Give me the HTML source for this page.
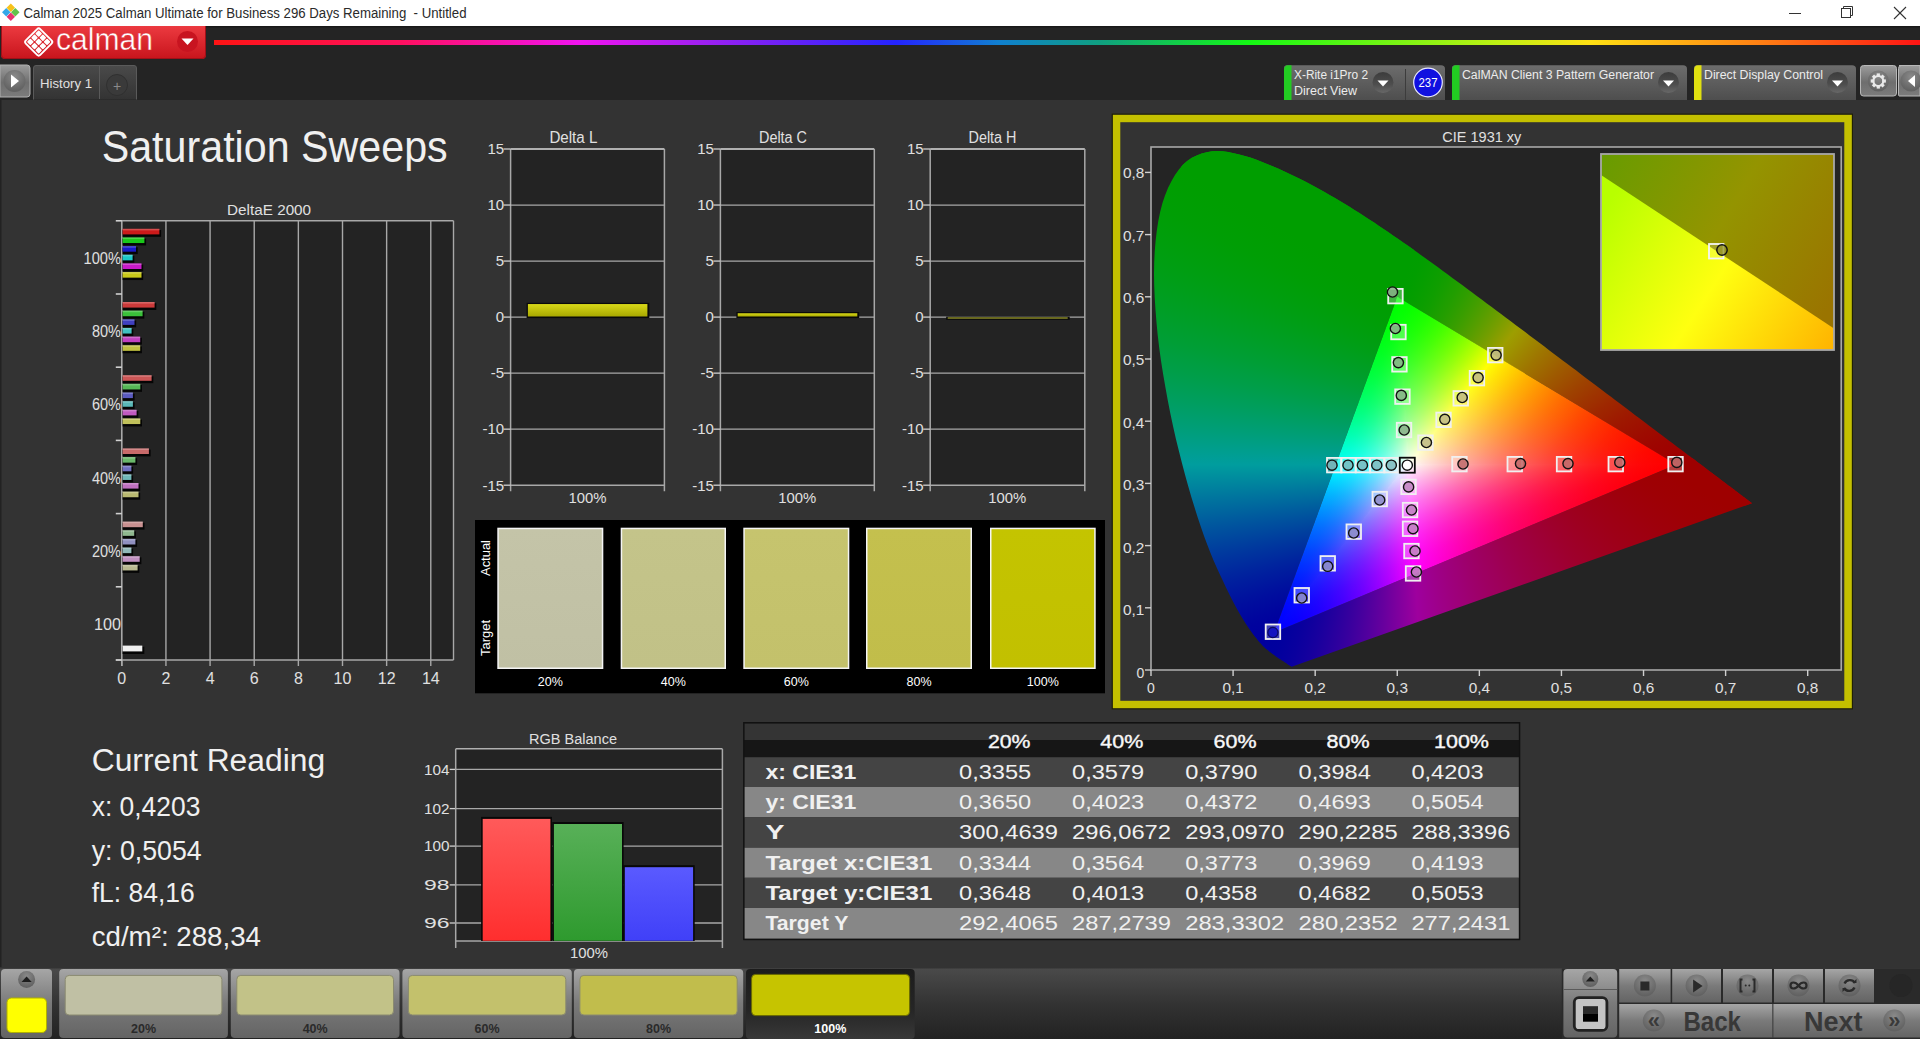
<!DOCTYPE html><html><head><meta charset="utf-8"><title>Calman</title><style>
html,body{margin:0;padding:0;width:1920px;height:1039px;overflow:hidden;background:#333333;}
#root{position:relative;width:1920px;height:1039px;overflow:hidden;}
svg.L{position:absolute;left:0;top:0;}
text{font-family:"Liberation Sans",sans-serif;}
.cie{position:absolute;left:0;top:0;width:1920px;height:1039px;}
.cie > div{position:absolute;left:0;top:0;width:1920px;height:1039px;}
</style></head><body><div id="root">
<svg class="L" width="1920" height="1039" viewBox="0 0 1920 1039">
<defs>
<linearGradient id="gLogo" x1="0" y1="0" x2="0" y2="1"><stop offset="0" stop-color="#ec3a40"/><stop offset="1" stop-color="#c8141c"/></linearGradient>
<linearGradient id="gRain" x1="214" y1="0" x2="1920" y2="0" gradientUnits="userSpaceOnUse">
<stop offset="0" stop-color="#ff1414"/><stop offset="0.11" stop-color="#ff1060"/><stop offset="0.215" stop-color="#f014f0"/><stop offset="0.285" stop-color="#a020f0"/><stop offset="0.40" stop-color="#2424ff"/><stop offset="0.46" stop-color="#1080d0"/><stop offset="0.52" stop-color="#10a080"/><stop offset="0.607" stop-color="#14f814"/><stop offset="0.754" stop-color="#c0f014"/><stop offset="0.807" stop-color="#ffe014"/><stop offset="0.906" stop-color="#ff8014"/><stop offset="1" stop-color="#ff1414"/></linearGradient>
<linearGradient id="gBtn" x1="0" y1="0" x2="0" y2="1"><stop offset="0" stop-color="#9c9c9c"/><stop offset="0.55" stop-color="#6e6e6e"/><stop offset="1" stop-color="#7c7c7c"/></linearGradient>
<linearGradient id="gDev" x1="0" y1="0" x2="0" y2="1"><stop offset="0" stop-color="#6c6c6c"/><stop offset="1" stop-color="#4e4e4e"/></linearGradient>
<linearGradient id="gTab" x1="0" y1="0" x2="0" y2="1"><stop offset="0" stop-color="#4a4a4a"/><stop offset="1" stop-color="#333333"/></linearGradient>
<radialGradient id="gKnob" cx="0.5" cy="0.35" r="0.6"><stop offset="0" stop-color="#5a5a5a"/><stop offset="1" stop-color="#3a3a3a"/></radialGradient>
<linearGradient id="gKnobD" x1="0" y1="0" x2="0" y2="1"><stop offset="0" stop-color="#3c3c3c"/><stop offset="0.6" stop-color="#4e4e4e"/><stop offset="1" stop-color="#686868"/></linearGradient>
<radialGradient id="gKnobL" cx="0.5" cy="0.3" r="0.65"><stop offset="0" stop-color="#8a8a8a"/><stop offset="1" stop-color="#626262"/></radialGradient>
<linearGradient id="gHdr" x1="0" y1="0" x2="0" y2="1"><stop offset="0" stop-color="#343434"/><stop offset="0.5" stop-color="#343434"/><stop offset="0.5" stop-color="#161616"/><stop offset="1" stop-color="#161616"/></linearGradient>
<linearGradient id="gBarY" x1="0" y1="0" x2="0" y2="1"><stop offset="0" stop-color="#d8d818"/><stop offset="1" stop-color="#a8a800"/></linearGradient>
<linearGradient id="gRed" x1="0" y1="0" x2="0" y2="1"><stop offset="0" stop-color="#ff5a5a"/><stop offset="1" stop-color="#ff2e2e"/></linearGradient>
<linearGradient id="gGrn" x1="0" y1="0" x2="0" y2="1"><stop offset="0" stop-color="#58b058"/><stop offset="1" stop-color="#2e9a2e"/></linearGradient>
<linearGradient id="gBlu" x1="0" y1="0" x2="0" y2="1"><stop offset="0" stop-color="#5a5aff"/><stop offset="1" stop-color="#4040f8"/></linearGradient>
<linearGradient id="gBot" x1="0" y1="0" x2="0" y2="1"><stop offset="0" stop-color="#a6a6a6"/><stop offset="0.5" stop-color="#7a7a7a"/><stop offset="1" stop-color="#646464"/></linearGradient>
<linearGradient id="gBotSel" x1="0" y1="0" x2="0" y2="1"><stop offset="0" stop-color="#1c1c1c"/><stop offset="0.6" stop-color="#262626"/><stop offset="1" stop-color="#383838"/></linearGradient>
</defs>
<rect x="0" y="0" width="1920" height="26" fill="#ffffff" />
<g transform="translate(10.8,12.3) rotate(45)"><rect x="-6.2" y="-6.2" width="6" height="6" fill="#f7c21a"/><rect x="0.2" y="-6.2" width="6" height="6" fill="#62c24a"/><rect x="0.2" y="0.2" width="6" height="6" fill="#e8336f"/><rect x="-6.2" y="0.2" width="6" height="6" fill="#35a7e8"/></g>
<text x="23.5" y="18" font-size="14" fill="#2a2a2a" text-anchor="start" font-weight="normal" textLength="443" lengthAdjust="spacingAndGlyphs" >Calman 2025 Calman Ultimate for Business 296 Days Remaining&#160;&#160;- Untitled</text>
<line x1="1789" y1="13.5" x2="1801" y2="13.5" stroke="#333" stroke-width="1" />
<rect x="1841.5" y="8.5" width="9" height="9" fill="none" stroke="#333" stroke-width="1"/>
<path d="M1843.5 8.5 V6.5 H1852.5 V15.5 H1850.5" fill="none" stroke="#333" stroke-width="1"/>
<line x1="1894" y1="7" x2="1906" y2="19" stroke="#333" stroke-width="1.1" />
<line x1="1906" y1="7" x2="1894" y2="19" stroke="#333" stroke-width="1.1" />
<rect x="0" y="26" width="1920" height="74" fill="#242424" />
<rect x="0" y="26" width="1920" height="1.5" fill="#181818" />
<path d="M1 26 H206 V55 Q206 59 202 59 H5 Q1 59 1 55 Z" fill="url(#gLogo)"/>
<path d="M1.5 26 V55 Q1.5 58.5 5 58.5 H202 Q205.5 58.5 205.5 55 V26" fill="none" stroke="#a01018" stroke-width="1"/>
<g transform="translate(38.7,42) rotate(45)"><rect x="-8.40" y="-8.40" width="4.9" height="4.9" rx="0.8" fill="#ffffff"/><rect x="-8.40" y="-2.50" width="4.9" height="4.9" rx="0.8" fill="#ffffff"/><rect x="-8.40" y="3.40" width="4.9" height="4.9" rx="0.8" fill="#ffffff"/><rect x="-2.50" y="-8.40" width="4.9" height="4.9" rx="0.8" fill="#ffffff"/><rect x="-2.50" y="-2.50" width="4.9" height="4.9" rx="0.8" fill="#ffffff"/><rect x="-2.50" y="3.40" width="4.9" height="4.9" rx="0.8" fill="#ffffff"/><rect x="3.40" y="-8.40" width="4.9" height="4.9" rx="0.8" fill="#ffffff"/><rect x="3.40" y="-2.50" width="4.9" height="4.9" rx="0.8" fill="#ffffff"/><rect x="3.40" y="3.40" width="4.9" height="4.9" rx="0.8" fill="#ffffff"/><rect x="-10.2" y="-10.2" width="20.4" height="20.4" rx="2.2" fill="none" stroke="#ffffff" stroke-width="1.9"/></g>
<text x="56" y="49.5" font-size="30.5" fill="#ffffff" text-anchor="start" font-weight="normal" textLength="97" lengthAdjust="spacingAndGlyphs" stroke="#dc2a30" stroke-width="0.45">calman</text>
<circle cx="187.5" cy="41.5" r="10.5" fill="#c81420"/>
<path d="M181.5 38.5 L193.5 38.5 L187.5 45 Z" fill="#ffffff"/>
<rect x="214" y="40" width="1706" height="5" fill="url(#gRain)" />
<path d="M0 65 H27 Q30 65 30 68 V94 Q30 97 27 97 H0 Z" fill="url(#gBtn)" stroke="#b0b0b0" stroke-width="1"/>
<circle cx="14.5" cy="81" r="11" fill="url(#gKnobL)"/>
<path d="M11 74.5 L19 81 L11 87.5 Z" fill="#ffffff"/>
<path d="M33.5 99.5 V68 Q33.5 65.5 36 65.5 H134 Q136.5 65.5 136.5 68 V99.5" fill="url(#gTab)" stroke="#5a5a5a" stroke-width="1"/>
<line x1="99.5" y1="66" x2="99.5" y2="99" stroke="#5a5a5a" stroke-width="1" />
<text x="40" y="88" font-size="13.5" fill="#e0e0e0" text-anchor="start" font-weight="normal" textLength="52" lengthAdjust="spacingAndGlyphs" >History 1</text>
<circle cx="117" cy="85" r="10.5" fill="#3a3a3a" stroke="#303030"/>
<text x="117" y="90.5" font-size="14" fill="#8a8a8a" text-anchor="middle" font-weight="normal" >+</text>
<path d="M1284 100 V68 Q1284 65.3 1287 65.3 H1441 Q1445 65.3 1445 69 V100 Z" fill="url(#gDev)"/>
<path d="M1284 100 V70 Q1284 65.3 1288 65.3 H1291.5 V100 Z" fill="#22cc22"/>
<text x="1294" y="78.5" font-size="12.5" fill="#ececec" text-anchor="start" font-weight="normal" textLength="74" lengthAdjust="spacingAndGlyphs" >X-Rite i1Pro 2</text>
<text x="1294" y="95" font-size="12.5" fill="#ececec" text-anchor="start" font-weight="normal" textLength="63" lengthAdjust="spacingAndGlyphs" >Direct View</text>
<circle cx="1383" cy="82.5" r="10.5" fill="url(#gKnobD)"/>
<path d="M1377.5 80.5 H1388.5 L1383 86.5 Z" fill="#ffffff"/>
<line x1="1405.5" y1="69" x2="1405.5" y2="100" stroke="#3c3c3c" stroke-width="1" />
<circle cx="1428" cy="82.5" r="14.3" fill="#1010e0" stroke="#e8e8ff" stroke-width="1.2"/>
<text x="1428" y="87" font-size="12" fill="#ffffff" text-anchor="middle" font-weight="normal" textLength="19" lengthAdjust="spacingAndGlyphs" >237</text>
<path d="M1452 100 V68 Q1452 65.3 1455 65.3 H1683 Q1687 65.3 1687 69 V100 Z" fill="url(#gDev)"/>
<path d="M1452 100 V70 Q1452 65.3 1456 65.3 H1459.5 V100 Z" fill="#22cc22"/>
<text x="1462" y="78.5" font-size="12.5" fill="#ececec" text-anchor="start" font-weight="normal" textLength="192" lengthAdjust="spacingAndGlyphs" >CalMAN Client 3 Pattern Generator</text>
<circle cx="1668.5" cy="82.5" r="10.5" fill="url(#gKnobD)"/>
<path d="M1663.0 80.5 H1674.0 L1668.5 86.5 Z" fill="#ffffff"/>
<path d="M1694 100 V68 Q1694 65.3 1697 65.3 H1852 Q1856 65.3 1856 69 V100 Z" fill="url(#gDev)"/>
<path d="M1694 100 V70 Q1694 65.3 1698 65.3 H1701.5 V100 Z" fill="#e0e010"/>
<text x="1704" y="78.5" font-size="12.5" fill="#ececec" text-anchor="start" font-weight="normal" textLength="119" lengthAdjust="spacingAndGlyphs" >Direct Display Control</text>
<circle cx="1837.5" cy="82.5" r="10.5" fill="url(#gKnobD)"/>
<path d="M1832.0 80.5 H1843.0 L1837.5 86.5 Z" fill="#ffffff"/>
<rect x="1860.5" y="65.5" width="36" height="30.5" rx="3" fill="url(#gBtn)" stroke="#b8b8b8" stroke-width="1"/>
<circle cx="1878.3" cy="81" r="10.5" fill="url(#gKnobL)"/>
<rect x="-1.6" y="-7.6" width="3.2" height="3.6" fill="#e8e8e8" transform="translate(1878.3,81) rotate(0)"/><rect x="-1.6" y="-7.6" width="3.2" height="3.6" fill="#e8e8e8" transform="translate(1878.3,81) rotate(45)"/><rect x="-1.6" y="-7.6" width="3.2" height="3.6" fill="#e8e8e8" transform="translate(1878.3,81) rotate(90)"/><rect x="-1.6" y="-7.6" width="3.2" height="3.6" fill="#e8e8e8" transform="translate(1878.3,81) rotate(135)"/><rect x="-1.6" y="-7.6" width="3.2" height="3.6" fill="#e8e8e8" transform="translate(1878.3,81) rotate(180)"/><rect x="-1.6" y="-7.6" width="3.2" height="3.6" fill="#e8e8e8" transform="translate(1878.3,81) rotate(225)"/><rect x="-1.6" y="-7.6" width="3.2" height="3.6" fill="#e8e8e8" transform="translate(1878.3,81) rotate(270)"/><rect x="-1.6" y="-7.6" width="3.2" height="3.6" fill="#e8e8e8" transform="translate(1878.3,81) rotate(315)"/>
<circle cx="1878.3" cy="81" r="5" fill="none" stroke="#e8e8e8" stroke-width="2.2"/>
<path d="M1899 65.5 H1920 V96 H1899 Q1898.5 96 1898.5 93 V68.5 Q1898.5 65.5 1901.5 65.5 Z" fill="url(#gBtn)" stroke="#b8b8b8" stroke-width="1"/>
<circle cx="1911" cy="81" r="10.5" fill="url(#gKnobL)"/>
<path d="M1915 75 L1908 81 L1915 87 Z" fill="#ffffff"/>
<rect x="0" y="100" width="1920" height="867" fill="#333333" />
<rect x="0" y="100" width="1.5" height="867" fill="#222222" />
<text x="101.7" y="162" font-size="43.5" fill="#f0f0f0" text-anchor="start" font-weight="normal" textLength="346" lengthAdjust="spacingAndGlyphs" >Saturation Sweeps</text>
<rect x="121.8" y="220.8" width="331.7" height="439.2" fill="#232323" />
<line x1="165.94" y1="220.8" x2="165.94" y2="660.0" stroke="#a8a8a8" stroke-width="1.4" />
<line x1="210.07999999999998" y1="220.8" x2="210.07999999999998" y2="660.0" stroke="#a8a8a8" stroke-width="1.4" />
<line x1="254.22000000000003" y1="220.8" x2="254.22000000000003" y2="660.0" stroke="#a8a8a8" stroke-width="1.4" />
<line x1="298.36" y1="220.8" x2="298.36" y2="660.0" stroke="#a8a8a8" stroke-width="1.4" />
<line x1="342.5" y1="220.8" x2="342.5" y2="660.0" stroke="#a8a8a8" stroke-width="1.4" />
<line x1="386.64000000000004" y1="220.8" x2="386.64000000000004" y2="660.0" stroke="#a8a8a8" stroke-width="1.4" />
<line x1="430.78000000000003" y1="220.8" x2="430.78000000000003" y2="660.0" stroke="#a8a8a8" stroke-width="1.4" />
<line x1="121.8" y1="220.8" x2="453.5" y2="220.8" stroke="#a8a8a8" stroke-width="1.6" />
<line x1="453.5" y1="220.8" x2="453.5" y2="660.0" stroke="#a8a8a8" stroke-width="1.4" />
<line x1="121.8" y1="220.0" x2="121.8" y2="666.0" stroke="#a8a8a8" stroke-width="1.6" />
<line x1="115.8" y1="660.0" x2="453.5" y2="660.0" stroke="#a8a8a8" stroke-width="1.6" />
<line x1="121.8" y1="660.0" x2="121.8" y2="666.0" stroke="#a8a8a8" stroke-width="1.4" />
<text x="121.8" y="684" font-size="16" fill="#e0e0e0" text-anchor="middle" font-weight="normal" >0</text>
<line x1="165.94" y1="660.0" x2="165.94" y2="666.0" stroke="#a8a8a8" stroke-width="1.4" />
<text x="165.94" y="684" font-size="16" fill="#e0e0e0" text-anchor="middle" font-weight="normal" >2</text>
<line x1="210.07999999999998" y1="660.0" x2="210.07999999999998" y2="666.0" stroke="#a8a8a8" stroke-width="1.4" />
<text x="210.07999999999998" y="684" font-size="16" fill="#e0e0e0" text-anchor="middle" font-weight="normal" >4</text>
<line x1="254.22000000000003" y1="660.0" x2="254.22000000000003" y2="666.0" stroke="#a8a8a8" stroke-width="1.4" />
<text x="254.22000000000003" y="684" font-size="16" fill="#e0e0e0" text-anchor="middle" font-weight="normal" >6</text>
<line x1="298.36" y1="660.0" x2="298.36" y2="666.0" stroke="#a8a8a8" stroke-width="1.4" />
<text x="298.36" y="684" font-size="16" fill="#e0e0e0" text-anchor="middle" font-weight="normal" >8</text>
<line x1="342.5" y1="660.0" x2="342.5" y2="666.0" stroke="#a8a8a8" stroke-width="1.4" />
<text x="342.5" y="684" font-size="16" fill="#e0e0e0" text-anchor="middle" font-weight="normal" >10</text>
<line x1="386.64000000000004" y1="660.0" x2="386.64000000000004" y2="666.0" stroke="#a8a8a8" stroke-width="1.4" />
<text x="386.64000000000004" y="684" font-size="16" fill="#e0e0e0" text-anchor="middle" font-weight="normal" >12</text>
<line x1="430.78000000000003" y1="660.0" x2="430.78000000000003" y2="666.0" stroke="#a8a8a8" stroke-width="1.4" />
<text x="430.78000000000003" y="684" font-size="16" fill="#e0e0e0" text-anchor="middle" font-weight="normal" >14</text>
<line x1="115.8" y1="220.8" x2="121.8" y2="220.8" stroke="#d0d0d0" stroke-width="1.6" />
<line x1="115.8" y1="294.0" x2="121.8" y2="294.0" stroke="#d0d0d0" stroke-width="1.6" />
<line x1="115.8" y1="367.20000000000005" x2="121.8" y2="367.20000000000005" stroke="#d0d0d0" stroke-width="1.6" />
<line x1="115.8" y1="440.40000000000003" x2="121.8" y2="440.40000000000003" stroke="#d0d0d0" stroke-width="1.6" />
<line x1="115.8" y1="513.6" x2="121.8" y2="513.6" stroke="#d0d0d0" stroke-width="1.6" />
<line x1="115.8" y1="586.8" x2="121.8" y2="586.8" stroke="#d0d0d0" stroke-width="1.6" />
<line x1="115.8" y1="660.0" x2="121.8" y2="660.0" stroke="#d0d0d0" stroke-width="1.6" />
<text x="227.1" y="215" font-size="15.5" fill="#e0e0e0" text-anchor="start" font-weight="normal" textLength="84" lengthAdjust="spacingAndGlyphs" >DeltaE 2000</text>
<text x="121" y="264.0" font-size="16" fill="#e0e0e0" text-anchor="end" font-weight="normal" textLength="37.5" lengthAdjust="spacingAndGlyphs" >100%</text>
<text x="121" y="337.2" font-size="16" fill="#e0e0e0" text-anchor="end" font-weight="normal" textLength="29" lengthAdjust="spacingAndGlyphs" >80%</text>
<text x="121" y="410.40000000000003" font-size="16" fill="#e0e0e0" text-anchor="end" font-weight="normal" textLength="29" lengthAdjust="spacingAndGlyphs" >60%</text>
<text x="121" y="483.6" font-size="16" fill="#e0e0e0" text-anchor="end" font-weight="normal" textLength="29" lengthAdjust="spacingAndGlyphs" >40%</text>
<text x="121" y="556.8000000000001" font-size="16" fill="#e0e0e0" text-anchor="end" font-weight="normal" textLength="29" lengthAdjust="spacingAndGlyphs" >20%</text>
<text x="121" y="630.0" font-size="16" fill="#e0e0e0" text-anchor="end" font-weight="normal" textLength="27" lengthAdjust="spacingAndGlyphs" >100</text>
<rect x="122.6" y="230.0" width="38.500000000000014" height="6.8" fill="#050505" />
<rect x="122.6" y="228.8" width="36.80000000000001" height="5.6" fill="#cc1a1a" />
<rect x="122.6" y="228.8" width="36.80000000000001" height="1.6" fill="rgba(255,255,255,0.22)" />
<rect x="122.6" y="238.65" width="23.500000000000014" height="6.8" fill="#050505" />
<rect x="122.6" y="237.45000000000002" width="21.800000000000015" height="5.6" fill="#1ac81a" />
<rect x="122.6" y="237.45000000000002" width="21.800000000000015" height="1.6" fill="rgba(255,255,255,0.22)" />
<rect x="122.6" y="247.3" width="15.100000000000009" height="6.8" fill="#050505" />
<rect x="122.6" y="246.10000000000002" width="13.40000000000001" height="5.6" fill="#1a1ac8" />
<rect x="122.6" y="246.10000000000002" width="13.40000000000001" height="1.6" fill="rgba(255,255,255,0.22)" />
<rect x="122.6" y="255.95" width="11.700000000000003" height="6.8" fill="#050505" />
<rect x="122.6" y="254.75" width="10.000000000000004" height="5.6" fill="#1ac8c8" />
<rect x="122.6" y="254.75" width="10.000000000000004" height="1.6" fill="rgba(255,255,255,0.22)" />
<rect x="122.6" y="264.6" width="20.60000000000001" height="6.8" fill="#050505" />
<rect x="122.6" y="263.40000000000003" width="18.90000000000001" height="5.6" fill="#c81ac8" />
<rect x="122.6" y="263.40000000000003" width="18.90000000000001" height="1.6" fill="rgba(255,255,255,0.22)" />
<rect x="122.6" y="273.25" width="20.60000000000001" height="6.8" fill="#050505" />
<rect x="122.6" y="272.05" width="18.90000000000001" height="5.6" fill="#c8c81a" />
<rect x="122.6" y="272.05" width="18.90000000000001" height="1.6" fill="rgba(255,255,255,0.22)" />
<rect x="122.6" y="303.2" width="33.7" height="6.8" fill="#050505" />
<rect x="122.6" y="302.0" width="32.0" height="5.6" fill="#cc3a3a" />
<rect x="122.6" y="302.0" width="32.0" height="1.6" fill="rgba(255,255,255,0.22)" />
<rect x="122.6" y="311.84999999999997" width="21.700000000000003" height="6.8" fill="#050505" />
<rect x="122.6" y="310.65" width="20.000000000000004" height="5.6" fill="#3ac03a" />
<rect x="122.6" y="310.65" width="20.000000000000004" height="1.6" fill="rgba(255,255,255,0.22)" />
<rect x="122.6" y="320.5" width="13.600000000000009" height="6.8" fill="#050505" />
<rect x="122.6" y="319.3" width="11.90000000000001" height="5.6" fill="#4040c0" />
<rect x="122.6" y="319.3" width="11.90000000000001" height="1.6" fill="rgba(255,255,255,0.22)" />
<rect x="122.6" y="329.15" width="10.700000000000003" height="6.8" fill="#050505" />
<rect x="122.6" y="327.95" width="9.000000000000004" height="5.6" fill="#40c0c0" />
<rect x="122.6" y="327.95" width="9.000000000000004" height="1.6" fill="rgba(255,255,255,0.22)" />
<rect x="122.6" y="337.8" width="19.299999999999997" height="6.8" fill="#050505" />
<rect x="122.6" y="336.6" width="17.599999999999998" height="5.6" fill="#c040c0" />
<rect x="122.6" y="336.6" width="17.599999999999998" height="1.6" fill="rgba(255,255,255,0.22)" />
<rect x="122.6" y="346.45" width="19.299999999999997" height="6.8" fill="#050505" />
<rect x="122.6" y="345.25" width="17.599999999999998" height="5.6" fill="#c0c040" />
<rect x="122.6" y="345.25" width="17.599999999999998" height="1.6" fill="rgba(255,255,255,0.22)" />
<rect x="122.6" y="376.40000000000003" width="30.700000000000003" height="6.8" fill="#050505" />
<rect x="122.6" y="375.20000000000005" width="29.000000000000004" height="5.6" fill="#cc5656" />
<rect x="122.6" y="375.20000000000005" width="29.000000000000004" height="1.6" fill="rgba(255,255,255,0.22)" />
<rect x="122.6" y="385.05" width="19.39999999999999" height="6.8" fill="#050505" />
<rect x="122.6" y="383.85" width="17.699999999999992" height="5.6" fill="#56b856" />
<rect x="122.6" y="383.85" width="17.699999999999992" height="1.6" fill="rgba(255,255,255,0.22)" />
<rect x="122.6" y="393.70000000000005" width="12.000000000000014" height="6.8" fill="#050505" />
<rect x="122.6" y="392.50000000000006" width="10.300000000000015" height="5.6" fill="#5a5ac0" />
<rect x="122.6" y="392.50000000000006" width="10.300000000000015" height="1.6" fill="rgba(255,255,255,0.22)" />
<rect x="122.6" y="402.35" width="12.000000000000014" height="6.8" fill="#050505" />
<rect x="122.6" y="401.15000000000003" width="10.300000000000015" height="5.6" fill="#5ab8b8" />
<rect x="122.6" y="401.15000000000003" width="10.300000000000015" height="1.6" fill="rgba(255,255,255,0.22)" />
<rect x="122.6" y="411.00000000000006" width="15.700000000000003" height="6.8" fill="#050505" />
<rect x="122.6" y="409.80000000000007" width="14.000000000000004" height="5.6" fill="#c05ac0" />
<rect x="122.6" y="409.80000000000007" width="14.000000000000004" height="1.6" fill="rgba(255,255,255,0.22)" />
<rect x="122.6" y="419.65000000000003" width="19.39999999999999" height="6.8" fill="#050505" />
<rect x="122.6" y="418.45000000000005" width="17.699999999999992" height="5.6" fill="#c0c05a" />
<rect x="122.6" y="418.45000000000005" width="17.699999999999992" height="1.6" fill="rgba(255,255,255,0.22)" />
<rect x="122.6" y="449.6" width="28.000000000000014" height="6.8" fill="#050505" />
<rect x="122.6" y="448.40000000000003" width="26.300000000000015" height="5.6" fill="#c86a6a" />
<rect x="122.6" y="448.40000000000003" width="26.300000000000015" height="1.6" fill="rgba(255,255,255,0.22)" />
<rect x="122.6" y="458.25" width="14.500000000000014" height="6.8" fill="#050505" />
<rect x="122.6" y="457.05" width="12.800000000000015" height="5.6" fill="#6ab86a" />
<rect x="122.6" y="457.05" width="12.800000000000015" height="1.6" fill="rgba(255,255,255,0.22)" />
<rect x="122.6" y="466.90000000000003" width="10.500000000000014" height="6.8" fill="#050505" />
<rect x="122.6" y="465.70000000000005" width="8.800000000000015" height="5.6" fill="#7070c0" />
<rect x="122.6" y="465.70000000000005" width="8.800000000000015" height="1.6" fill="rgba(255,255,255,0.22)" />
<rect x="122.6" y="475.55" width="10.500000000000014" height="6.8" fill="#050505" />
<rect x="122.6" y="474.35" width="8.800000000000015" height="5.6" fill="#70b8b8" />
<rect x="122.6" y="474.35" width="8.800000000000015" height="1.6" fill="rgba(255,255,255,0.22)" />
<rect x="122.6" y="484.20000000000005" width="17.60000000000001" height="6.8" fill="#050505" />
<rect x="122.6" y="483.00000000000006" width="15.90000000000001" height="5.6" fill="#c070c0" />
<rect x="122.6" y="483.00000000000006" width="15.90000000000001" height="1.6" fill="rgba(255,255,255,0.22)" />
<rect x="122.6" y="492.85" width="17.60000000000001" height="6.8" fill="#050505" />
<rect x="122.6" y="491.65000000000003" width="15.90000000000001" height="5.6" fill="#b8b870" />
<rect x="122.6" y="491.65000000000003" width="15.90000000000001" height="1.6" fill="rgba(255,255,255,0.22)" />
<rect x="122.6" y="522.8000000000001" width="21.89999999999999" height="6.8" fill="#050505" />
<rect x="122.6" y="521.6" width="20.199999999999992" height="5.6" fill="#c89090" />
<rect x="122.6" y="521.6" width="20.199999999999992" height="1.6" fill="rgba(255,255,255,0.22)" />
<rect x="122.6" y="531.45" width="13.299999999999997" height="6.8" fill="#050505" />
<rect x="122.6" y="530.25" width="11.599999999999998" height="5.6" fill="#90b890" />
<rect x="122.6" y="530.25" width="11.599999999999998" height="1.6" fill="rgba(255,255,255,0.22)" />
<rect x="122.6" y="540.1" width="14.500000000000014" height="6.8" fill="#050505" />
<rect x="122.6" y="538.9" width="12.800000000000015" height="5.6" fill="#9090c0" />
<rect x="122.6" y="538.9" width="12.800000000000015" height="1.6" fill="rgba(255,255,255,0.22)" />
<rect x="122.6" y="548.7500000000001" width="10.500000000000014" height="6.8" fill="#050505" />
<rect x="122.6" y="547.5500000000001" width="8.800000000000015" height="5.6" fill="#90b8b8" />
<rect x="122.6" y="547.5500000000001" width="8.800000000000015" height="1.6" fill="rgba(255,255,255,0.22)" />
<rect x="122.6" y="557.4000000000001" width="18.799999999999997" height="6.8" fill="#050505" />
<rect x="122.6" y="556.2" width="17.099999999999998" height="5.6" fill="#c090c0" />
<rect x="122.6" y="556.2" width="17.099999999999998" height="1.6" fill="rgba(255,255,255,0.22)" />
<rect x="122.6" y="566.0500000000001" width="16.700000000000003" height="6.8" fill="#050505" />
<rect x="122.6" y="564.85" width="15.000000000000004" height="5.6" fill="#b8b890" />
<rect x="122.6" y="564.85" width="15.000000000000004" height="1.6" fill="rgba(255,255,255,0.22)" />
<rect x="122.6" y="646.8" width="21.700000000000003" height="7.2" fill="#050505" />
<rect x="122.6" y="645.6" width="19.700000000000003" height="5.8" fill="#f0f0f0"/>
<rect x="510.6" y="149.0" width="153.79999999999995" height="336.2" fill="#232323" />
<line x1="510.6" y1="429.1666666666667" x2="664.4" y2="429.1666666666667" stroke="#a8a8a8" stroke-width="1.3" />
<line x1="510.6" y1="373.1333333333333" x2="664.4" y2="373.1333333333333" stroke="#a8a8a8" stroke-width="1.3" />
<line x1="510.6" y1="317.1" x2="664.4" y2="317.1" stroke="#a8a8a8" stroke-width="1.3" />
<line x1="510.6" y1="261.0666666666667" x2="664.4" y2="261.0666666666667" stroke="#a8a8a8" stroke-width="1.3" />
<line x1="510.6" y1="205.03333333333336" x2="664.4" y2="205.03333333333336" stroke="#a8a8a8" stroke-width="1.3" />
<line x1="510.6" y1="149.0" x2="664.4" y2="149.0" stroke="#b0b0b0" stroke-width="2" />
<line x1="510.6" y1="149.0" x2="510.6" y2="491.2" stroke="#a8a8a8" stroke-width="1.5" />
<line x1="664.4" y1="149.0" x2="664.4" y2="491.2" stroke="#a8a8a8" stroke-width="1.5" />
<line x1="510.6" y1="485.2" x2="664.4" y2="485.2" stroke="#a8a8a8" stroke-width="1.5" />
<line x1="503.6" y1="485.20000000000005" x2="510.6" y2="485.20000000000005" stroke="#d0d0d0" stroke-width="1.3" />
<text x="504.1" y="490.50000000000006" font-size="15" fill="#e0e0e0" text-anchor="end" font-weight="normal" >-15</text>
<line x1="503.6" y1="429.1666666666667" x2="510.6" y2="429.1666666666667" stroke="#d0d0d0" stroke-width="1.3" />
<text x="504.1" y="434.4666666666667" font-size="15" fill="#e0e0e0" text-anchor="end" font-weight="normal" >-10</text>
<line x1="503.6" y1="373.1333333333333" x2="510.6" y2="373.1333333333333" stroke="#d0d0d0" stroke-width="1.3" />
<text x="504.1" y="378.43333333333334" font-size="15" fill="#e0e0e0" text-anchor="end" font-weight="normal" >-5</text>
<line x1="503.6" y1="317.1" x2="510.6" y2="317.1" stroke="#d0d0d0" stroke-width="1.3" />
<text x="504.1" y="322.40000000000003" font-size="15" fill="#e0e0e0" text-anchor="end" font-weight="normal" >0</text>
<line x1="503.6" y1="261.0666666666667" x2="510.6" y2="261.0666666666667" stroke="#d0d0d0" stroke-width="1.3" />
<text x="504.1" y="266.36666666666673" font-size="15" fill="#e0e0e0" text-anchor="end" font-weight="normal" >5</text>
<line x1="503.6" y1="205.03333333333336" x2="510.6" y2="205.03333333333336" stroke="#d0d0d0" stroke-width="1.3" />
<text x="504.1" y="210.33333333333337" font-size="15" fill="#e0e0e0" text-anchor="end" font-weight="normal" >10</text>
<line x1="503.6" y1="149.00000000000003" x2="510.6" y2="149.00000000000003" stroke="#d0d0d0" stroke-width="1.3" />
<text x="504.1" y="154.30000000000004" font-size="15" fill="#e0e0e0" text-anchor="end" font-weight="normal" >15</text>
<text x="573.4" y="143.1" font-size="16" fill="#e0e0e0" text-anchor="middle" font-weight="normal" textLength="48" lengthAdjust="spacingAndGlyphs" >Delta L</text>
<text x="587.4" y="502.5" font-size="15.5" fill="#e0e0e0" text-anchor="middle" font-weight="normal" textLength="38" lengthAdjust="spacingAndGlyphs" >100%</text>
<rect x="526.6" y="302.85200000000003" width="122.69999999999993" height="15.248000000000001" fill="#0a0a0a" />
<rect x="527.9" y="304.052" width="119.49999999999993" height="12.448" fill="url(#gBarY)" />
<rect x="720.4" y="149.0" width="153.89999999999998" height="336.2" fill="#232323" />
<line x1="720.4" y1="429.1666666666667" x2="874.3" y2="429.1666666666667" stroke="#a8a8a8" stroke-width="1.3" />
<line x1="720.4" y1="373.1333333333333" x2="874.3" y2="373.1333333333333" stroke="#a8a8a8" stroke-width="1.3" />
<line x1="720.4" y1="317.1" x2="874.3" y2="317.1" stroke="#a8a8a8" stroke-width="1.3" />
<line x1="720.4" y1="261.0666666666667" x2="874.3" y2="261.0666666666667" stroke="#a8a8a8" stroke-width="1.3" />
<line x1="720.4" y1="205.03333333333336" x2="874.3" y2="205.03333333333336" stroke="#a8a8a8" stroke-width="1.3" />
<line x1="720.4" y1="149.0" x2="874.3" y2="149.0" stroke="#b0b0b0" stroke-width="2" />
<line x1="720.4" y1="149.0" x2="720.4" y2="491.2" stroke="#a8a8a8" stroke-width="1.5" />
<line x1="874.3" y1="149.0" x2="874.3" y2="491.2" stroke="#a8a8a8" stroke-width="1.5" />
<line x1="720.4" y1="485.2" x2="874.3" y2="485.2" stroke="#a8a8a8" stroke-width="1.5" />
<line x1="713.4" y1="485.20000000000005" x2="720.4" y2="485.20000000000005" stroke="#d0d0d0" stroke-width="1.3" />
<text x="713.9" y="490.50000000000006" font-size="15" fill="#e0e0e0" text-anchor="end" font-weight="normal" >-15</text>
<line x1="713.4" y1="429.1666666666667" x2="720.4" y2="429.1666666666667" stroke="#d0d0d0" stroke-width="1.3" />
<text x="713.9" y="434.4666666666667" font-size="15" fill="#e0e0e0" text-anchor="end" font-weight="normal" >-10</text>
<line x1="713.4" y1="373.1333333333333" x2="720.4" y2="373.1333333333333" stroke="#d0d0d0" stroke-width="1.3" />
<text x="713.9" y="378.43333333333334" font-size="15" fill="#e0e0e0" text-anchor="end" font-weight="normal" >-5</text>
<line x1="713.4" y1="317.1" x2="720.4" y2="317.1" stroke="#d0d0d0" stroke-width="1.3" />
<text x="713.9" y="322.40000000000003" font-size="15" fill="#e0e0e0" text-anchor="end" font-weight="normal" >0</text>
<line x1="713.4" y1="261.0666666666667" x2="720.4" y2="261.0666666666667" stroke="#d0d0d0" stroke-width="1.3" />
<text x="713.9" y="266.36666666666673" font-size="15" fill="#e0e0e0" text-anchor="end" font-weight="normal" >5</text>
<line x1="713.4" y1="205.03333333333336" x2="720.4" y2="205.03333333333336" stroke="#d0d0d0" stroke-width="1.3" />
<text x="713.9" y="210.33333333333337" font-size="15" fill="#e0e0e0" text-anchor="end" font-weight="normal" >10</text>
<line x1="713.4" y1="149.00000000000003" x2="720.4" y2="149.00000000000003" stroke="#d0d0d0" stroke-width="1.3" />
<text x="713.9" y="154.30000000000004" font-size="15" fill="#e0e0e0" text-anchor="end" font-weight="normal" >15</text>
<text x="783.0" y="143.1" font-size="16" fill="#e0e0e0" text-anchor="middle" font-weight="normal" textLength="48" lengthAdjust="spacingAndGlyphs" >Delta C</text>
<text x="797.3" y="502.5" font-size="15.5" fill="#e0e0e0" text-anchor="middle" font-weight="normal" textLength="38" lengthAdjust="spacingAndGlyphs" >100%</text>
<rect x="736.4" y="312.0414666666667" width="122.79999999999995" height="6.058533333333333" fill="#0a0a0a" />
<rect x="737.6999999999999" y="313.24146666666667" width="119.59999999999995" height="3.2585333333333333" fill="url(#gBarY)" />
<rect x="930.2" y="149.0" width="154.5999999999999" height="336.2" fill="#232323" />
<line x1="930.2" y1="429.1666666666667" x2="1084.8" y2="429.1666666666667" stroke="#a8a8a8" stroke-width="1.3" />
<line x1="930.2" y1="373.1333333333333" x2="1084.8" y2="373.1333333333333" stroke="#a8a8a8" stroke-width="1.3" />
<line x1="930.2" y1="317.1" x2="1084.8" y2="317.1" stroke="#a8a8a8" stroke-width="1.3" />
<line x1="930.2" y1="261.0666666666667" x2="1084.8" y2="261.0666666666667" stroke="#a8a8a8" stroke-width="1.3" />
<line x1="930.2" y1="205.03333333333336" x2="1084.8" y2="205.03333333333336" stroke="#a8a8a8" stroke-width="1.3" />
<line x1="930.2" y1="149.0" x2="1084.8" y2="149.0" stroke="#b0b0b0" stroke-width="2" />
<line x1="930.2" y1="149.0" x2="930.2" y2="491.2" stroke="#a8a8a8" stroke-width="1.5" />
<line x1="1084.8" y1="149.0" x2="1084.8" y2="491.2" stroke="#a8a8a8" stroke-width="1.5" />
<line x1="930.2" y1="485.2" x2="1084.8" y2="485.2" stroke="#a8a8a8" stroke-width="1.5" />
<line x1="923.2" y1="485.20000000000005" x2="930.2" y2="485.20000000000005" stroke="#d0d0d0" stroke-width="1.3" />
<text x="923.7" y="490.50000000000006" font-size="15" fill="#e0e0e0" text-anchor="end" font-weight="normal" >-15</text>
<line x1="923.2" y1="429.1666666666667" x2="930.2" y2="429.1666666666667" stroke="#d0d0d0" stroke-width="1.3" />
<text x="923.7" y="434.4666666666667" font-size="15" fill="#e0e0e0" text-anchor="end" font-weight="normal" >-10</text>
<line x1="923.2" y1="373.1333333333333" x2="930.2" y2="373.1333333333333" stroke="#d0d0d0" stroke-width="1.3" />
<text x="923.7" y="378.43333333333334" font-size="15" fill="#e0e0e0" text-anchor="end" font-weight="normal" >-5</text>
<line x1="923.2" y1="317.1" x2="930.2" y2="317.1" stroke="#d0d0d0" stroke-width="1.3" />
<text x="923.7" y="322.40000000000003" font-size="15" fill="#e0e0e0" text-anchor="end" font-weight="normal" >0</text>
<line x1="923.2" y1="261.0666666666667" x2="930.2" y2="261.0666666666667" stroke="#d0d0d0" stroke-width="1.3" />
<text x="923.7" y="266.36666666666673" font-size="15" fill="#e0e0e0" text-anchor="end" font-weight="normal" >5</text>
<line x1="923.2" y1="205.03333333333336" x2="930.2" y2="205.03333333333336" stroke="#d0d0d0" stroke-width="1.3" />
<text x="923.7" y="210.33333333333337" font-size="15" fill="#e0e0e0" text-anchor="end" font-weight="normal" >10</text>
<line x1="923.2" y1="149.00000000000003" x2="930.2" y2="149.00000000000003" stroke="#d0d0d0" stroke-width="1.3" />
<text x="923.7" y="154.30000000000004" font-size="15" fill="#e0e0e0" text-anchor="end" font-weight="normal" >15</text>
<text x="992.5" y="143.1" font-size="16" fill="#e0e0e0" text-anchor="middle" font-weight="normal" textLength="48" lengthAdjust="spacingAndGlyphs" >Delta H</text>
<text x="1007.2" y="502.5" font-size="15.5" fill="#e0e0e0" text-anchor="middle" font-weight="normal" textLength="38" lengthAdjust="spacingAndGlyphs" >100%</text>
<rect x="946.2" y="316.6" width="123.5" height="3.2" fill="#0a0a0a" />
<rect x="947.7" y="317.40000000000003" width="120.0" height="1.2" fill="#a8a830" />
<rect x="475" y="520" width="630" height="173.3" fill="#000000" />
<defs><linearGradient id="sw0" x1="0" y1="0" x2="0" y2="1"><stop offset="0" stop-color="#c4c4a8"/><stop offset="1" stop-color="#c0c0a4"/></linearGradient><linearGradient id="sw1" x1="0" y1="0" x2="0" y2="1"><stop offset="0" stop-color="#c4c48a"/><stop offset="1" stop-color="#c1c187"/></linearGradient><linearGradient id="sw2" x1="0" y1="0" x2="0" y2="1"><stop offset="0" stop-color="#c6c46e"/><stop offset="1" stop-color="#c3c16b"/></linearGradient><linearGradient id="sw3" x1="0" y1="0" x2="0" y2="1"><stop offset="0" stop-color="#c4c04e"/><stop offset="1" stop-color="#c1bd4a"/></linearGradient><linearGradient id="sw4" x1="0" y1="0" x2="0" y2="1"><stop offset="0" stop-color="#c4c400"/><stop offset="1" stop-color="#c2c000"/></linearGradient></defs>
<rect x="497.3" y="527.7" width="105.99999999999994" height="141.3" fill="#f4f4f4" />
<rect x="498.8" y="529.2" width="102.99999999999994" height="138.3" fill="url(#sw0)" />
<text x="550.3" y="685.5" font-size="12.5" fill="#ffffff" text-anchor="middle" font-weight="normal" >20%</text>
<rect x="620.7" y="527.7" width="105.29999999999995" height="141.3" fill="#f4f4f4" />
<rect x="622.2" y="529.2" width="102.29999999999995" height="138.3" fill="url(#sw1)" />
<text x="673.35" y="685.5" font-size="12.5" fill="#ffffff" text-anchor="middle" font-weight="normal" >40%</text>
<rect x="743.3" y="527.7" width="106.0" height="141.3" fill="#f4f4f4" />
<rect x="744.8" y="529.2" width="103.0" height="138.3" fill="url(#sw2)" />
<text x="796.3" y="685.5" font-size="12.5" fill="#ffffff" text-anchor="middle" font-weight="normal" >60%</text>
<rect x="866" y="527.7" width="106" height="141.3" fill="#f4f4f4" />
<rect x="867.5" y="529.2" width="103" height="138.3" fill="url(#sw3)" />
<text x="919.0" y="685.5" font-size="12.5" fill="#ffffff" text-anchor="middle" font-weight="normal" >80%</text>
<rect x="990" y="527.7" width="105.70000000000005" height="141.3" fill="#f4f4f4" />
<rect x="991.5" y="529.2" width="102.70000000000005" height="138.3" fill="url(#sw4)" />
<text x="1042.85" y="685.5" font-size="12.5" fill="#ffffff" text-anchor="middle" font-weight="normal" >100%</text>
<text x="0" y="0" font-size="13" fill="#ffffff" text-anchor="middle" transform="translate(489.5,558) rotate(-90)" textLength="36" lengthAdjust="spacingAndGlyphs">Actual</text>
<text x="0" y="0" font-size="13" fill="#ffffff" text-anchor="middle" transform="translate(489.5,638) rotate(-90)" textLength="36" lengthAdjust="spacingAndGlyphs">Target</text>
<rect x="1116.5" y="118.4" width="731.6" height="586.2" fill="#333333" stroke="#c4c000" stroke-width="7.6"/>
<rect x="1112.2" y="114.1" width="740.2" height="594.8" fill="none" stroke="#1e1e00" stroke-width="1"/>
<rect x="1151.0" y="147.0" width="690.2" height="523.0" fill="#242424" />
<text x="1481.8" y="141.5" font-size="15.5" fill="#e0e0e0" text-anchor="middle" font-weight="normal" textLength="79" lengthAdjust="spacingAndGlyphs" >CIE 1931 xy</text>
<text x="91.7" y="770.5" font-size="31" fill="#f0f0f0" text-anchor="start" font-weight="normal" textLength="233.5" lengthAdjust="spacingAndGlyphs" >Current Reading</text>
<text x="91.7" y="816.4" font-size="28" fill="#f0f0f0" text-anchor="start" font-weight="normal" textLength="108.7" lengthAdjust="spacingAndGlyphs" >x: 0,4203</text>
<text x="91.7" y="860.0" font-size="28" fill="#f0f0f0" text-anchor="start" font-weight="normal" textLength="110" lengthAdjust="spacingAndGlyphs" >y: 0,5054</text>
<text x="91.7" y="902.3" font-size="28" fill="#f0f0f0" text-anchor="start" font-weight="normal" textLength="103" lengthAdjust="spacingAndGlyphs" >fL: 84,16</text>
<text x="91.7" y="946.0" font-size="28" fill="#f0f0f0" text-anchor="start" font-weight="normal" textLength="169.3" lengthAdjust="spacingAndGlyphs" >cd/m²: 288,34</text>
<rect x="455.7" y="748.8" width="266.7" height="192.20000000000005" fill="#232323" />
<line x1="455.7" y1="769.4" x2="722.4" y2="769.4" stroke="#a8a8a8" stroke-width="1.3" />
<line x1="449.7" y1="769.4" x2="455.7" y2="769.4" stroke="#d0d0d0" stroke-width="1.3" />
<text x="449.5" y="774.6999999999999" font-size="15" fill="#e0e0e0" text-anchor="end" font-weight="normal" textLength="25.5" lengthAdjust="spacingAndGlyphs" >104</text>
<line x1="455.7" y1="808.6" x2="722.4" y2="808.6" stroke="#a8a8a8" stroke-width="1.3" />
<line x1="449.7" y1="808.6" x2="455.7" y2="808.6" stroke="#d0d0d0" stroke-width="1.3" />
<text x="449.5" y="813.9" font-size="15" fill="#e0e0e0" text-anchor="end" font-weight="normal" textLength="25.5" lengthAdjust="spacingAndGlyphs" >102</text>
<line x1="455.7" y1="846.1" x2="722.4" y2="846.1" stroke="#a8a8a8" stroke-width="1.3" />
<line x1="449.7" y1="846.1" x2="455.7" y2="846.1" stroke="#d0d0d0" stroke-width="1.3" />
<text x="449.5" y="851.4" font-size="15" fill="#e0e0e0" text-anchor="end" font-weight="normal" textLength="25.5" lengthAdjust="spacingAndGlyphs" >100</text>
<line x1="455.7" y1="884.9" x2="722.4" y2="884.9" stroke="#a8a8a8" stroke-width="1.3" />
<line x1="449.7" y1="884.9" x2="455.7" y2="884.9" stroke="#d0d0d0" stroke-width="1.3" />
<text x="449.5" y="890.1999999999999" font-size="15" fill="#e0e0e0" text-anchor="end" font-weight="normal" textLength="25.5" lengthAdjust="spacingAndGlyphs" >98</text>
<line x1="455.7" y1="923.0" x2="722.4" y2="923.0" stroke="#a8a8a8" stroke-width="1.3" />
<line x1="449.7" y1="923.0" x2="455.7" y2="923.0" stroke="#d0d0d0" stroke-width="1.3" />
<text x="449.5" y="928.3" font-size="15" fill="#e0e0e0" text-anchor="end" font-weight="normal" textLength="25.5" lengthAdjust="spacingAndGlyphs" >96</text>
<line x1="455.7" y1="748.8" x2="722.4" y2="748.8" stroke="#b0b0b0" stroke-width="1.6" />
<line x1="455.7" y1="748.8" x2="455.7" y2="948.0" stroke="#a8a8a8" stroke-width="1.5" />
<line x1="722.4" y1="748.8" x2="722.4" y2="948.0" stroke="#a8a8a8" stroke-width="1.5" />
<line x1="455.7" y1="941.0" x2="722.4" y2="941.0" stroke="#a8a8a8" stroke-width="1.5" />
<text x="573" y="743.5" font-size="15.5" fill="#e0e0e0" text-anchor="middle" font-weight="normal" textLength="88" lengthAdjust="spacingAndGlyphs" >RGB Balance</text>
<text x="589.1" y="958.4" font-size="15.5" fill="#e0e0e0" text-anchor="middle" font-weight="normal" textLength="38" lengthAdjust="spacingAndGlyphs" >100%</text>
<rect x="481.1" y="816.9" width="70.89999999999998" height="124.09999999999998" fill="#080808" />
<rect x="482.70000000000005" y="818.9" width="67.69999999999997" height="121.89999999999998" fill="url(#gRed)" />
<rect x="552.3" y="822.0" width="71.30000000000007" height="118.99999999999996" fill="#080808" />
<rect x="553.9" y="824.0" width="68.10000000000007" height="116.79999999999995" fill="url(#gGrn)" />
<rect x="623.2" y="865.1999999999999" width="71.5" height="75.80000000000003" fill="#080808" />
<rect x="624.8000000000001" y="867.1999999999999" width="68.3" height="73.60000000000002" fill="url(#gBlu)" />
<rect x="743.1" y="722.0" width="777.1999999999999" height="218.2" fill="#111111" />
<rect x="744.6" y="723.6" width="774.1999999999999" height="33.6" fill="url(#gHdr)" />
<rect x="744.6" y="757.2" width="774.1999999999999" height="29.799999999999955" fill="#444444" />
<rect x="744.6" y="787.0" width="774.1999999999999" height="30.399999999999977" fill="#878787" />
<rect x="744.6" y="817.4" width="774.1999999999999" height="30.300000000000068" fill="#444444" />
<rect x="744.6" y="847.7" width="774.1999999999999" height="30.09999999999991" fill="#878787" />
<rect x="744.6" y="877.8" width="774.1999999999999" height="30.200000000000045" fill="#444444" />
<rect x="744.6" y="908.0" width="774.1999999999999" height="30.600000000000023" fill="#878787" />
<text x="1030.5" y="747.8" font-size="17.5" fill="#f8f8f8" text-anchor="end" font-weight="normal" textLength="42.5" lengthAdjust="spacingAndGlyphs" stroke="#f8f8f8" stroke-width="0.35">20%</text>
<text x="1143.3" y="747.8" font-size="17.5" fill="#f8f8f8" text-anchor="end" font-weight="normal" textLength="43" lengthAdjust="spacingAndGlyphs" stroke="#f8f8f8" stroke-width="0.35">40%</text>
<text x="1256.5" y="747.8" font-size="17.5" fill="#f8f8f8" text-anchor="end" font-weight="normal" textLength="43" lengthAdjust="spacingAndGlyphs" stroke="#f8f8f8" stroke-width="0.35">60%</text>
<text x="1369.6" y="747.8" font-size="17.5" fill="#f8f8f8" text-anchor="end" font-weight="normal" textLength="43" lengthAdjust="spacingAndGlyphs" stroke="#f8f8f8" stroke-width="0.35">80%</text>
<text x="1489.0" y="747.8" font-size="17.5" fill="#f8f8f8" text-anchor="end" font-weight="normal" textLength="55" lengthAdjust="spacingAndGlyphs" stroke="#f8f8f8" stroke-width="0.35">100%</text>
<text x="765.4" y="779.2" font-size="19.5" fill="#f0f0f0" text-anchor="start" font-weight="bold" textLength="91" lengthAdjust="spacingAndGlyphs" >x: CIE31</text>
<text x="959.0" y="779.2" font-size="19.5" fill="#f0f0f0" text-anchor="start" font-weight="normal" textLength="72.2" lengthAdjust="spacingAndGlyphs" >0,3355</text>
<text x="1072.0" y="779.2" font-size="19.5" fill="#f0f0f0" text-anchor="start" font-weight="normal" textLength="72.2" lengthAdjust="spacingAndGlyphs" >0,3579</text>
<text x="1185.2" y="779.2" font-size="19.5" fill="#f0f0f0" text-anchor="start" font-weight="normal" textLength="72.2" lengthAdjust="spacingAndGlyphs" >0,3790</text>
<text x="1298.6" y="779.2" font-size="19.5" fill="#f0f0f0" text-anchor="start" font-weight="normal" textLength="72.2" lengthAdjust="spacingAndGlyphs" >0,3984</text>
<text x="1411.4" y="779.2" font-size="19.5" fill="#f0f0f0" text-anchor="start" font-weight="normal" textLength="72.2" lengthAdjust="spacingAndGlyphs" >0,4203</text>
<text x="765.4" y="809.0" font-size="19.5" fill="#f0f0f0" text-anchor="start" font-weight="bold" textLength="91" lengthAdjust="spacingAndGlyphs" >y: CIE31</text>
<text x="959.0" y="809.0" font-size="19.5" fill="#f0f0f0" text-anchor="start" font-weight="normal" textLength="72.2" lengthAdjust="spacingAndGlyphs" >0,3650</text>
<text x="1072.0" y="809.0" font-size="19.5" fill="#f0f0f0" text-anchor="start" font-weight="normal" textLength="72.2" lengthAdjust="spacingAndGlyphs" >0,4023</text>
<text x="1185.2" y="809.0" font-size="19.5" fill="#f0f0f0" text-anchor="start" font-weight="normal" textLength="72.2" lengthAdjust="spacingAndGlyphs" >0,4372</text>
<text x="1298.6" y="809.0" font-size="19.5" fill="#f0f0f0" text-anchor="start" font-weight="normal" textLength="72.2" lengthAdjust="spacingAndGlyphs" >0,4693</text>
<text x="1411.4" y="809.0" font-size="19.5" fill="#f0f0f0" text-anchor="start" font-weight="normal" textLength="72.2" lengthAdjust="spacingAndGlyphs" >0,5054</text>
<text x="765.4" y="839.4" font-size="19.5" fill="#f0f0f0" text-anchor="start" font-weight="bold" textLength="19" lengthAdjust="spacingAndGlyphs" >Y</text>
<text x="959.0" y="839.4" font-size="19.5" fill="#f0f0f0" text-anchor="start" font-weight="normal" textLength="99.0" lengthAdjust="spacingAndGlyphs" >300,4639</text>
<text x="1072.0" y="839.4" font-size="19.5" fill="#f0f0f0" text-anchor="start" font-weight="normal" textLength="99.0" lengthAdjust="spacingAndGlyphs" >296,0672</text>
<text x="1185.2" y="839.4" font-size="19.5" fill="#f0f0f0" text-anchor="start" font-weight="normal" textLength="99.0" lengthAdjust="spacingAndGlyphs" >293,0970</text>
<text x="1298.6" y="839.4" font-size="19.5" fill="#f0f0f0" text-anchor="start" font-weight="normal" textLength="99.0" lengthAdjust="spacingAndGlyphs" >290,2285</text>
<text x="1411.4" y="839.4" font-size="19.5" fill="#f0f0f0" text-anchor="start" font-weight="normal" textLength="99.0" lengthAdjust="spacingAndGlyphs" >288,3396</text>
<text x="765.4" y="869.7" font-size="19.5" fill="#f0f0f0" text-anchor="start" font-weight="bold" textLength="167" lengthAdjust="spacingAndGlyphs" >Target x:CIE31</text>
<text x="959.0" y="869.7" font-size="19.5" fill="#f0f0f0" text-anchor="start" font-weight="normal" textLength="72.2" lengthAdjust="spacingAndGlyphs" >0,3344</text>
<text x="1072.0" y="869.7" font-size="19.5" fill="#f0f0f0" text-anchor="start" font-weight="normal" textLength="72.2" lengthAdjust="spacingAndGlyphs" >0,3564</text>
<text x="1185.2" y="869.7" font-size="19.5" fill="#f0f0f0" text-anchor="start" font-weight="normal" textLength="72.2" lengthAdjust="spacingAndGlyphs" >0,3773</text>
<text x="1298.6" y="869.7" font-size="19.5" fill="#f0f0f0" text-anchor="start" font-weight="normal" textLength="72.2" lengthAdjust="spacingAndGlyphs" >0,3969</text>
<text x="1411.4" y="869.7" font-size="19.5" fill="#f0f0f0" text-anchor="start" font-weight="normal" textLength="72.2" lengthAdjust="spacingAndGlyphs" >0,4193</text>
<text x="765.4" y="899.8" font-size="19.5" fill="#f0f0f0" text-anchor="start" font-weight="bold" textLength="167" lengthAdjust="spacingAndGlyphs" >Target y:CIE31</text>
<text x="959.0" y="899.8" font-size="19.5" fill="#f0f0f0" text-anchor="start" font-weight="normal" textLength="72.2" lengthAdjust="spacingAndGlyphs" >0,3648</text>
<text x="1072.0" y="899.8" font-size="19.5" fill="#f0f0f0" text-anchor="start" font-weight="normal" textLength="72.2" lengthAdjust="spacingAndGlyphs" >0,4013</text>
<text x="1185.2" y="899.8" font-size="19.5" fill="#f0f0f0" text-anchor="start" font-weight="normal" textLength="72.2" lengthAdjust="spacingAndGlyphs" >0,4358</text>
<text x="1298.6" y="899.8" font-size="19.5" fill="#f0f0f0" text-anchor="start" font-weight="normal" textLength="72.2" lengthAdjust="spacingAndGlyphs" >0,4682</text>
<text x="1411.4" y="899.8" font-size="19.5" fill="#f0f0f0" text-anchor="start" font-weight="normal" textLength="72.2" lengthAdjust="spacingAndGlyphs" >0,5053</text>
<text x="765.4" y="930.0" font-size="19.5" fill="#f0f0f0" text-anchor="start" font-weight="bold" textLength="83" lengthAdjust="spacingAndGlyphs" >Target Y</text>
<text x="959.0" y="930.0" font-size="19.5" fill="#f0f0f0" text-anchor="start" font-weight="normal" textLength="99.0" lengthAdjust="spacingAndGlyphs" >292,4065</text>
<text x="1072.0" y="930.0" font-size="19.5" fill="#f0f0f0" text-anchor="start" font-weight="normal" textLength="99.0" lengthAdjust="spacingAndGlyphs" >287,2739</text>
<text x="1185.2" y="930.0" font-size="19.5" fill="#f0f0f0" text-anchor="start" font-weight="normal" textLength="99.0" lengthAdjust="spacingAndGlyphs" >283,3302</text>
<text x="1298.6" y="930.0" font-size="19.5" fill="#f0f0f0" text-anchor="start" font-weight="normal" textLength="99.0" lengthAdjust="spacingAndGlyphs" >280,2352</text>
<text x="1411.4" y="930.0" font-size="19.5" fill="#f0f0f0" text-anchor="start" font-weight="normal" textLength="99.0" lengthAdjust="spacingAndGlyphs" >277,2431</text>
<defs><linearGradient id="gBB" x1="0" y1="0" x2="0" y2="1"><stop offset="0" stop-color="#4a4a4a"/><stop offset="0.5" stop-color="#333333"/><stop offset="1" stop-color="#222222"/></linearGradient></defs>
<rect x="0" y="968.5" width="1920" height="70.5" fill="url(#gBB)" />
<rect x="1" y="969" width="51" height="69" rx="4" fill="url(#gBot)"/>
<circle cx="26.6" cy="979.5" r="8.5" fill="url(#gKnobL)"/>
<path d="M21.5 982 L26.6 976.5 L31.7 982 Z" fill="#1e1e1e"/>
<rect x="7" y="998" width="39.5" height="34.5" rx="4.5" fill="#ffff00" stroke="#b0b000" stroke-width="1"/>
<rect x="59.2" y="969" width="168.7" height="69" rx="4" fill="url(#gBot)"/>
<rect x="65.2" y="975.4" width="156.7" height="39.6" rx="4" fill="#c0c0a4" stroke="#8a8a70" stroke-width="1"/>
<text x="143.55" y="1033" font-size="12.5" fill="#2a2a2a" text-anchor="middle" font-weight="bold" >20%</text>
<rect x="230.8" y="969" width="168.7" height="69" rx="4" fill="url(#gBot)"/>
<rect x="236.8" y="975.4" width="156.7" height="39.6" rx="4" fill="#c2c288" stroke="#8a8a70" stroke-width="1"/>
<text x="315.15" y="1033" font-size="12.5" fill="#2a2a2a" text-anchor="middle" font-weight="bold" >40%</text>
<rect x="402.4" y="969" width="169.39999999999998" height="69" rx="4" fill="url(#gBot)"/>
<rect x="408.4" y="975.4" width="157.39999999999998" height="39.6" rx="4" fill="#c3c16c" stroke="#8a8a70" stroke-width="1"/>
<text x="487.09999999999997" y="1033" font-size="12.5" fill="#2a2a2a" text-anchor="middle" font-weight="bold" >60%</text>
<rect x="573.9" y="969" width="169.30000000000007" height="69" rx="4" fill="url(#gBot)"/>
<rect x="579.9" y="975.4" width="157.30000000000007" height="39.6" rx="4" fill="#c1bd4c" stroke="#8a8a70" stroke-width="1"/>
<text x="658.55" y="1033" font-size="12.5" fill="#2a2a2a" text-anchor="middle" font-weight="bold" >80%</text>
<rect x="746" y="969" width="168.7" height="70" rx="4" fill="url(#gBotSel)"/>
<rect x="751.6" y="974.4" width="158" height="41.2" rx="4" fill="#c6c400" stroke="#6a6a00" stroke-width="1"/>
<text x="830.3" y="1033" font-size="12.5" fill="#ffffff" text-anchor="middle" font-weight="bold" >100%</text>
<rect x="1561.8" y="968.5" width="358.2" height="70.5" fill="#2a2a2a" />
<rect x="1563.4" y="969" width="53.8" height="68.5" rx="4" fill="url(#gBot)"/>
<line x1="1563.4" y1="989.5" x2="1617.2" y2="989.5" stroke="#5a5a5a" stroke-width="1.2" />
<circle cx="1590.3" cy="979" r="8" fill="url(#gKnobL)"/>
<path d="M1585.8 981.5 L1590.3 976.5 L1594.8 981.5 Z" fill="#1e1e1e"/>
<rect x="1574.3" y="997.6" width="32.6" height="32.8" rx="4.5" fill="#c4c4c4" stroke="#222222" stroke-width="2.8"/>
<rect x="1583" y="1006.5" width="15" height="15.2" fill="#000000" />
<rect x="1583" y="1006.5" width="15" height="7.5" fill="#2a2a2a" />
<rect x="1619.2" y="969" width="51.399999999999864" height="33.5" fill="url(#gBot)"/>
<circle cx="1644.9" cy="985.5" r="11" fill="url(#gKnobL)"/>
<rect x="1672.2" y="969" width="48.799999999999955" height="33.5" fill="url(#gBot)"/>
<circle cx="1696.6" cy="985.5" r="11" fill="url(#gKnobL)"/>
<rect x="1723.0" y="969" width="49.0" height="33.5" fill="url(#gBot)"/>
<circle cx="1747.5" cy="985.5" r="11" fill="url(#gKnobL)"/>
<rect x="1774.0" y="969" width="49.0" height="33.5" fill="url(#gBot)"/>
<circle cx="1798.5" cy="985.5" r="11" fill="url(#gKnobL)"/>
<rect x="1825.0" y="969" width="49.0" height="33.5" fill="url(#gBot)"/>
<circle cx="1849.5" cy="985.5" r="11" fill="url(#gKnobL)"/>
<rect x="1640.4" y="981.5" width="9" height="9" fill="#2a2a2a" />
<path d="M1693.1 979.5 L1702.6 986 L1693.1 992.5 Z" fill="#2a2a2a"/>
<path d="M1742.5 979.5 H1740.5 V991.5 H1742.5 M1752.5 979.5 H1754.5 V991.5 H1752.5" fill="none" stroke="#2a2a2a" stroke-width="2"/>
<circle cx="1745.7" cy="985.5" r="1" fill="#2a2a2a"/><circle cx="1749.3" cy="985.5" r="1" fill="#2a2a2a"/>
<path d="M1798.5 985.5 C1795.5 981.5 1790.5 981.5 1790.5 985.5 C1790.5 989.5 1795.5 989.5 1798.5 985.5 C1801.5 981.5 1806.5 981.5 1806.5 985.5 C1806.5 989.5 1801.5 989.5 1798.5 985.5 Z" fill="none" stroke="#2a2a2a" stroke-width="2.2"/>
<path d="M1855.0 983 A6 6 0 0 0 1844.5 983.5 M1844.0 988 A6 6 0 0 0 1854.5 987.5" fill="none" stroke="#2a2a2a" stroke-width="2.4"/>
<path d="M1852.5 983 L1856.5 983 L1856.5 979 Z M1846.5 988 L1842.5 988 L1842.5 992 Z" fill="#2a2a2a"/>
<circle cx="1901" cy="985.5" r="11.5" fill="#262626"/>
<rect x="1619.2" y="1004" width="153.4" height="33.5" fill="url(#gBot)"/>
<rect x="1773.2" y="1004" width="146.8" height="33.5" fill="url(#gBot)"/>
<line x1="1772.8" y1="1004" x2="1772.8" y2="1037.5" stroke="#4a4a4a" stroke-width="1" />
<circle cx="1653.8" cy="1020.5" r="11" fill="url(#gKnobL)"/>
<circle cx="1894.3" cy="1020.5" r="11" fill="url(#gKnobL)"/>
<text x="1653.8" y="1027.5" font-size="22" fill="#3a3a3a" text-anchor="middle" font-weight="bold" >«</text>
<text x="1894.3" y="1027.5" font-size="22" fill="#3a3a3a" text-anchor="middle" font-weight="bold" >»</text>
<text x="1683.5" y="1030.5" font-size="27.5" fill="#383838" text-anchor="start" font-weight="bold" textLength="57.5" lengthAdjust="spacingAndGlyphs" >Back</text>
<text x="1804" y="1030.5" font-size="27.5" fill="#383838" text-anchor="start" font-weight="bold" textLength="58.6" lengthAdjust="spacingAndGlyphs" >Next</text>
</svg>
<div class="cie" style="clip-path:polygon(1291.7px 666.7px, 1291.5px 666.6px, 1291.2px 666.5px, 1290.9px 666.3px, 1290.5px 666.1px, 1290.1px 665.9px, 1289.7px 665.6px, 1289.1px 665.3px, 1288.5px 664.9px, 1287.9px 664.4px, 1287.2px 663.9px, 1286.6px 663.5px, 1286.0px 663.1px, 1285.5px 662.8px, 1285.0px 662.5px, 1284.6px 662.2px, 1284.2px 661.9px, 1283.8px 661.6px, 1283.3px 661.3px, 1282.7px 661.0px, 1282.1px 660.6px, 1281.5px 660.2px, 1280.9px 659.8px, 1280.2px 659.3px, 1279.6px 658.9px, 1278.9px 658.4px, 1278.1px 658.0px, 1277.4px 657.5px, 1276.6px 656.9px, 1275.8px 656.4px, 1275.0px 655.8px, 1274.1px 655.1px, 1273.2px 654.5px, 1272.2px 653.8px, 1271.3px 653.1px, 1270.3px 652.3px, 1269.2px 651.4px, 1268.2px 650.5px, 1267.1px 649.6px, 1266.0px 648.7px, 1264.8px 647.6px, 1263.6px 646.4px, 1262.2px 645.1px, 1260.9px 643.6px, 1259.4px 642.0px, 1257.9px 640.2px, 1256.3px 638.3px, 1254.6px 636.3px, 1252.9px 633.9px, 1251.1px 631.5px, 1249.2px 628.8px, 1247.3px 626.0px, 1245.3px 623.0px, 1243.2px 619.6px, 1241.0px 615.9px, 1238.7px 611.9px, 1236.3px 607.7px, 1233.9px 603.2px, 1231.3px 598.3px, 1228.7px 593.0px, 1226.0px 587.4px, 1223.1px 581.3px, 1220.1px 574.9px, 1216.9px 568.1px, 1213.8px 560.9px, 1210.6px 553.2px, 1207.4px 545.1px, 1204.2px 536.4px, 1201.0px 527.3px, 1197.8px 517.7px, 1194.6px 507.6px, 1191.4px 497.2px, 1188.3px 486.4px, 1185.1px 475.1px, 1182.0px 463.3px, 1178.9px 451.0px, 1175.8px 438.5px, 1173.0px 425.9px, 1170.3px 413.2px, 1167.8px 400.4px, 1165.4px 387.3px, 1163.1px 374.1px, 1161.0px 360.8px, 1159.2px 347.8px, 1157.7px 335.0px, 1156.5px 322.5px, 1155.5px 310.0px, 1154.7px 297.6px, 1154.2px 285.6px, 1154.0px 273.9px, 1154.2px 262.6px, 1154.7px 251.7px, 1155.6px 241.1px, 1156.8px 230.8px, 1158.3px 221.0px, 1160.2px 211.8px, 1162.4px 203.3px, 1165.0px 195.4px, 1168.0px 188.0px, 1171.4px 181.2px, 1175.0px 175.0px, 1178.9px 169.6px, 1182.9px 164.8px, 1187.2px 160.9px, 1191.9px 157.8px, 1196.7px 155.4px, 1201.7px 153.5px, 1206.8px 152.2px, 1212.0px 151.3px, 1217.2px 150.9px, 1222.6px 151.2px, 1228.1px 152.0px, 1233.7px 153.2px, 1239.2px 154.5px, 1244.8px 156.0px, 1250.3px 157.6px, 1255.9px 159.5px, 1261.5px 161.7px, 1267.0px 163.9px, 1272.6px 166.3px, 1278.0px 168.6px, 1283.4px 171.0px, 1288.6px 173.4px, 1293.9px 175.9px, 1299.1px 178.5px, 1304.2px 181.1px, 1309.4px 183.7px, 1314.5px 186.4px, 1319.5px 189.2px, 1324.5px 192.0px, 1329.5px 194.9px, 1334.5px 197.8px, 1339.5px 200.7px, 1344.5px 203.7px, 1349.5px 206.8px, 1354.4px 209.9px, 1359.4px 213.0px, 1364.3px 216.2px, 1369.2px 219.4px, 1374.1px 222.6px, 1379.0px 225.9px, 1383.9px 229.2px, 1388.8px 232.5px, 1393.7px 235.9px, 1398.6px 239.3px, 1403.5px 242.7px, 1408.4px 246.1px, 1413.3px 249.6px, 1418.2px 253.1px, 1423.0px 256.6px, 1427.9px 260.1px, 1432.8px 263.6px, 1437.7px 267.1px, 1442.6px 270.7px, 1447.5px 274.3px, 1452.4px 277.9px, 1457.3px 281.5px, 1462.2px 285.1px, 1467.1px 288.7px, 1471.9px 292.3px, 1476.8px 295.9px, 1481.7px 299.5px, 1486.5px 303.2px, 1491.4px 306.8px, 1496.3px 310.4px, 1501.1px 314.0px, 1506.0px 317.7px, 1510.8px 321.3px, 1515.6px 324.9px, 1520.4px 328.5px, 1525.2px 332.1px, 1529.9px 335.7px, 1534.7px 339.2px, 1539.4px 342.8px, 1544.1px 346.3px, 1548.8px 349.9px, 1553.4px 353.4px, 1558.1px 356.9px, 1562.7px 360.4px, 1567.2px 363.8px, 1571.8px 367.2px, 1576.3px 370.6px, 1580.7px 374.0px, 1585.2px 377.4px, 1589.6px 380.7px, 1594.0px 384.0px, 1598.3px 387.3px, 1602.6px 390.5px, 1606.8px 393.7px, 1611.0px 396.8px, 1615.1px 399.9px, 1619.2px 403.0px, 1623.2px 406.0px, 1627.2px 409.0px, 1631.1px 412.0px, 1634.9px 414.9px, 1638.7px 417.8px, 1642.4px 420.6px, 1646.0px 423.3px, 1649.5px 425.9px, 1652.9px 428.5px, 1656.2px 431.0px, 1659.5px 433.4px, 1662.6px 435.8px, 1665.8px 438.2px, 1668.8px 440.5px, 1671.9px 442.8px, 1674.8px 445.0px, 1677.7px 447.2px, 1680.5px 449.3px, 1683.2px 451.3px, 1685.7px 453.2px, 1688.0px 454.9px, 1690.2px 456.6px, 1692.4px 458.2px, 1694.9px 460.1px, 1697.6px 462.2px, 1700.8px 464.6px, 1704.4px 467.3px, 1708.2px 470.2px, 1712.0px 473.1px, 1715.6px 475.8px, 1718.7px 478.1px, 1721.5px 480.2px, 1723.9px 482.1px, 1726.2px 483.8px, 1728.3px 485.4px, 1730.3px 486.8px, 1732.2px 488.3px, 1734.0px 489.6px, 1735.7px 490.9px, 1737.2px 492.1px, 1738.7px 493.2px, 1740.0px 494.2px, 1741.3px 495.2px, 1742.5px 496.1px, 1743.6px 496.9px, 1744.5px 497.6px, 1745.4px 498.3px, 1746.3px 498.9px, 1747.0px 499.5px, 1747.8px 500.0px, 1748.4px 500.5px, 1748.9px 500.9px, 1749.4px 501.3px, 1749.9px 501.6px, 1750.3px 502.0px, 1750.7px 502.3px, 1751.1px 502.5px, 1751.4px 502.7px, 1751.6px 502.9px, 1751.8px 503.1px, 1752.0px 503.2px);">
<div style="background:conic-gradient(from 94.19deg at 1676.4px 464.6px, rgb(0,0,158) 0deg, rgb(0,0,158) 153.15deg, rgb(0,1,158) 154.03deg, rgb(0,2,158) 154.93deg, rgb(0,5,158) 155.85deg, rgb(0,9,158) 156.80deg, rgb(0,13,158) 157.78deg, rgb(0,18,158) 158.78deg, rgb(0,24,158) 159.81deg, rgb(0,30,158) 160.87deg, rgb(0,37,158) 161.96deg, rgb(0,45,158) 163.08deg, rgb(0,53,158) 164.22deg, rgb(0,62,158) 165.39deg, rgb(0,72,158) 166.60deg, rgb(0,82,158) 167.83deg, rgb(0,93,158) 169.09deg, rgb(0,105,158) 170.38deg, rgb(0,117,158) 171.70deg, rgb(0,130,158) 173.04deg, rgb(0,143,158) 174.41deg, rgb(0,157,158) 175.81deg, rgb(0,158,145) 177.24deg, rgb(0,158,132) 178.69deg, rgb(0,158,119) 180.16deg, rgb(0,158,107) 181.65deg, rgb(0,158,95) 183.17deg, rgb(0,158,84) 184.70deg, rgb(0,158,73) 186.25deg, rgb(0,158,64) 187.81deg, rgb(0,158,54) 189.39deg, rgb(0,158,46) 190.97deg, rgb(0,158,38) 192.57deg, rgb(0,158,31) 194.16deg, rgb(0,158,24) 195.77deg, rgb(0,158,18) 197.37deg, rgb(0,158,13) 198.97deg, rgb(0,158,9) 200.56deg, rgb(0,158,5) 202.15deg, rgb(0,158,3) 203.73deg, rgb(0,158,1) 205.29deg, rgb(0,158,0) 206.85deg, rgb(0,158,0) 360deg);clip-path:polygon(3118.5px -4397.7px, -323.9px 4991.1px, -5018.3px 3269.9px, -1575.9px -6118.9px);"></div>
<div style="background:conic-gradient(from 223.74deg at 1274.2px 632.6px, rgb(0,158,0) 0deg, rgb(0,158,0) 156.40deg, rgb(1,158,0) 157.68deg, rgb(5,158,0) 158.98deg, rgb(10,158,0) 160.28deg, rgb(16,158,0) 161.60deg, rgb(25,158,0) 162.91deg, rgb(34,158,0) 164.24deg, rgb(45,158,0) 165.56deg, rgb(57,158,0) 166.89deg, rgb(71,158,0) 168.22deg, rgb(86,158,0) 169.55deg, rgb(102,158,0) 170.87deg, rgb(119,158,0) 172.19deg, rgb(138,158,0) 173.51deg, rgb(157,158,0) 174.82deg, rgb(158,148,0) 176.12deg, rgb(158,137,0) 177.41deg, rgb(158,127,0) 178.69deg, rgb(158,117,0) 179.96deg, rgb(158,108,0) 181.22deg, rgb(158,99,0) 182.46deg, rgb(158,90,0) 183.69deg, rgb(158,82,0) 184.91deg, rgb(158,74,0) 186.11deg, rgb(158,66,0) 187.29deg, rgb(158,59,0) 188.45deg, rgb(158,52,0) 189.60deg, rgb(158,46,0) 190.73deg, rgb(158,39,0) 191.84deg, rgb(158,34,0) 192.93deg, rgb(158,28,0) 194.00deg, rgb(158,23,0) 195.05deg, rgb(158,19,0) 196.08deg, rgb(158,15,0) 197.09deg, rgb(158,11,0) 198.08deg, rgb(158,8,0) 199.05deg, rgb(158,5,0) 200.00deg, rgb(158,3,0) 200.93deg, rgb(158,2,0) 201.84deg, rgb(158,0,0) 202.73deg, rgb(158,0,0) 203.60deg, rgb(158,0,0) 360deg);clip-path:polygon(-2887.1px -2280.9px, 5681.7px 2874.3px, 8259.3px -1410.1px, -309.5px -6565.3px);"></div>
<div style="background:conic-gradient(from 340.58deg at 1397.3px 296.7px, rgb(158,0,0) 0deg, rgb(158,0,0) 140.45deg, rgb(158,0,0) 142.02deg, rgb(158,0,2) 143.66deg, rgb(158,0,3) 145.36deg, rgb(158,0,5) 147.13deg, rgb(158,0,8) 148.96deg, rgb(158,0,11) 150.85deg, rgb(158,0,15) 152.81deg, rgb(158,0,19) 154.82deg, rgb(158,0,23) 156.90deg, rgb(158,0,28) 159.03deg, rgb(158,0,33) 161.21deg, rgb(158,0,39) 163.44deg, rgb(158,0,45) 165.72deg, rgb(158,0,52) 168.03deg, rgb(158,0,59) 170.36deg, rgb(158,0,66) 172.72deg, rgb(158,0,73) 175.09deg, rgb(158,0,81) 177.47deg, rgb(158,0,90) 179.85deg, rgb(158,0,98) 182.21deg, rgb(158,0,107) 184.56deg, rgb(158,0,117) 186.88deg, rgb(158,0,126) 189.17deg, rgb(158,0,136) 191.42deg, rgb(158,0,147) 193.62deg, rgb(158,0,158) 195.77deg, rgb(139,0,158) 197.87deg, rgb(121,0,158) 199.91deg, rgb(103,0,158) 201.89deg, rgb(87,0,158) 203.81deg, rgb(72,0,158) 205.66deg, rgb(58,0,158) 207.45deg, rgb(46,0,158) 209.18deg, rgb(35,0,158) 210.84deg, rgb(25,0,158) 212.44deg, rgb(17,0,158) 213.98deg, rgb(10,0,158) 215.46deg, rgb(5,0,158) 216.88deg, rgb(1,0,158) 218.24deg, rgb(0,0,158) 219.55deg, rgb(0,0,158) 360deg);clip-path:polygon(6290.5px -1461.6px, -2937.6px 2390.8px, -1011.4px 7004.9px, 8216.7px 3152.5px);"></div>
<svg width="1920" height="1039" style="position:absolute;left:0;top:0;clip-path:polygon(1676.4px 464.6px, 1397.3px 296.7px, 1274.2px 632.6px);"><defs>
<linearGradient id="sa0" gradientUnits="userSpaceOnUse" x1="1676.44" y1="464.64" x2="1512.68" y2="333.85"><stop offset="0.000" stop-color="rgb(0,0,0)"/><stop offset="0.031" stop-color="rgb(0,0,0)"/><stop offset="0.062" stop-color="rgb(0,2,0)"/><stop offset="0.094" stop-color="rgb(0,4,0)"/><stop offset="0.125" stop-color="rgb(0,6,0)"/><stop offset="0.156" stop-color="rgb(0,9,0)"/><stop offset="0.188" stop-color="rgb(0,13,0)"/><stop offset="0.219" stop-color="rgb(0,17,0)"/><stop offset="0.250" stop-color="rgb(0,21,0)"/><stop offset="0.281" stop-color="rgb(0,26,0)"/><stop offset="0.312" stop-color="rgb(0,31,0)"/><stop offset="0.344" stop-color="rgb(0,37,0)"/><stop offset="0.375" stop-color="rgb(0,44,0)"/><stop offset="0.406" stop-color="rgb(0,50,0)"/><stop offset="0.438" stop-color="rgb(0,58,0)"/><stop offset="0.469" stop-color="rgb(0,65,0)"/><stop offset="0.500" stop-color="rgb(0,73,0)"/><stop offset="0.531" stop-color="rgb(0,82,0)"/><stop offset="0.562" stop-color="rgb(0,91,0)"/><stop offset="0.594" stop-color="rgb(0,100,0)"/><stop offset="0.625" stop-color="rgb(0,109,0)"/><stop offset="0.656" stop-color="rgb(0,119,0)"/><stop offset="0.688" stop-color="rgb(0,130,0)"/><stop offset="0.719" stop-color="rgb(0,141,0)"/><stop offset="0.750" stop-color="rgb(0,152,0)"/><stop offset="0.781" stop-color="rgb(0,164,0)"/><stop offset="0.812" stop-color="rgb(0,175,0)"/><stop offset="0.844" stop-color="rgb(0,188,0)"/><stop offset="0.875" stop-color="rgb(0,201,0)"/><stop offset="0.906" stop-color="rgb(0,214,0)"/><stop offset="0.938" stop-color="rgb(0,227,0)"/><stop offset="0.969" stop-color="rgb(0,241,0)"/><stop offset="1.000" stop-color="rgb(0,255,0)"/></linearGradient>
<linearGradient id="sb0" gradientUnits="userSpaceOnUse" x1="1407.73" y1="465.26" x2="1479.42" y2="346.10"><stop offset="0.000" stop-color="rgb(0,0,255)"/><stop offset="0.031" stop-color="rgb(0,0,241)"/><stop offset="0.062" stop-color="rgb(0,0,227)"/><stop offset="0.094" stop-color="rgb(0,0,214)"/><stop offset="0.125" stop-color="rgb(0,0,201)"/><stop offset="0.156" stop-color="rgb(0,0,188)"/><stop offset="0.188" stop-color="rgb(0,0,175)"/><stop offset="0.219" stop-color="rgb(0,0,164)"/><stop offset="0.250" stop-color="rgb(0,0,152)"/><stop offset="0.281" stop-color="rgb(0,0,141)"/><stop offset="0.312" stop-color="rgb(0,0,130)"/><stop offset="0.344" stop-color="rgb(0,0,119)"/><stop offset="0.375" stop-color="rgb(0,0,109)"/><stop offset="0.406" stop-color="rgb(0,0,100)"/><stop offset="0.438" stop-color="rgb(0,0,91)"/><stop offset="0.469" stop-color="rgb(0,0,82)"/><stop offset="0.500" stop-color="rgb(0,0,73)"/><stop offset="0.531" stop-color="rgb(0,0,65)"/><stop offset="0.562" stop-color="rgb(0,0,58)"/><stop offset="0.594" stop-color="rgb(0,0,50)"/><stop offset="0.625" stop-color="rgb(0,0,44)"/><stop offset="0.656" stop-color="rgb(0,0,37)"/><stop offset="0.688" stop-color="rgb(0,0,31)"/><stop offset="0.719" stop-color="rgb(0,0,26)"/><stop offset="0.750" stop-color="rgb(0,0,21)"/><stop offset="0.781" stop-color="rgb(0,0,17)"/><stop offset="0.812" stop-color="rgb(0,0,13)"/><stop offset="0.844" stop-color="rgb(0,0,9)"/><stop offset="0.875" stop-color="rgb(0,0,6)"/><stop offset="0.906" stop-color="rgb(0,0,4)"/><stop offset="0.938" stop-color="rgb(0,0,2)"/><stop offset="0.969" stop-color="rgb(0,0,0)"/><stop offset="1.000" stop-color="rgb(0,0,0)"/></linearGradient>
<linearGradient id="sa1" gradientUnits="userSpaceOnUse" x1="1397.30" y1="296.70" x2="1485.86" y2="367.43"><stop offset="0.000" stop-color="rgb(0,0,0)"/><stop offset="0.031" stop-color="rgb(0,0,0)"/><stop offset="0.062" stop-color="rgb(2,0,0)"/><stop offset="0.094" stop-color="rgb(4,0,0)"/><stop offset="0.125" stop-color="rgb(6,0,0)"/><stop offset="0.156" stop-color="rgb(9,0,0)"/><stop offset="0.188" stop-color="rgb(13,0,0)"/><stop offset="0.219" stop-color="rgb(17,0,0)"/><stop offset="0.250" stop-color="rgb(21,0,0)"/><stop offset="0.281" stop-color="rgb(26,0,0)"/><stop offset="0.312" stop-color="rgb(31,0,0)"/><stop offset="0.344" stop-color="rgb(37,0,0)"/><stop offset="0.375" stop-color="rgb(44,0,0)"/><stop offset="0.406" stop-color="rgb(50,0,0)"/><stop offset="0.438" stop-color="rgb(58,0,0)"/><stop offset="0.469" stop-color="rgb(65,0,0)"/><stop offset="0.500" stop-color="rgb(73,0,0)"/><stop offset="0.531" stop-color="rgb(82,0,0)"/><stop offset="0.562" stop-color="rgb(91,0,0)"/><stop offset="0.594" stop-color="rgb(100,0,0)"/><stop offset="0.625" stop-color="rgb(109,0,0)"/><stop offset="0.656" stop-color="rgb(119,0,0)"/><stop offset="0.688" stop-color="rgb(130,0,0)"/><stop offset="0.719" stop-color="rgb(141,0,0)"/><stop offset="0.750" stop-color="rgb(152,0,0)"/><stop offset="0.781" stop-color="rgb(164,0,0)"/><stop offset="0.812" stop-color="rgb(175,0,0)"/><stop offset="0.844" stop-color="rgb(188,0,0)"/><stop offset="0.875" stop-color="rgb(201,0,0)"/><stop offset="0.906" stop-color="rgb(214,0,0)"/><stop offset="0.938" stop-color="rgb(227,0,0)"/><stop offset="0.969" stop-color="rgb(241,0,0)"/><stop offset="1.000" stop-color="rgb(255,0,0)"/></linearGradient>
<linearGradient id="sb1" gradientUnits="userSpaceOnUse" x1="1407.73" y1="465.26" x2="1479.42" y2="346.10"><stop offset="0.000" stop-color="rgb(0,0,255)"/><stop offset="0.031" stop-color="rgb(0,0,241)"/><stop offset="0.062" stop-color="rgb(0,0,227)"/><stop offset="0.094" stop-color="rgb(0,0,214)"/><stop offset="0.125" stop-color="rgb(0,0,201)"/><stop offset="0.156" stop-color="rgb(0,0,188)"/><stop offset="0.188" stop-color="rgb(0,0,175)"/><stop offset="0.219" stop-color="rgb(0,0,164)"/><stop offset="0.250" stop-color="rgb(0,0,152)"/><stop offset="0.281" stop-color="rgb(0,0,141)"/><stop offset="0.312" stop-color="rgb(0,0,130)"/><stop offset="0.344" stop-color="rgb(0,0,119)"/><stop offset="0.375" stop-color="rgb(0,0,109)"/><stop offset="0.406" stop-color="rgb(0,0,100)"/><stop offset="0.438" stop-color="rgb(0,0,91)"/><stop offset="0.469" stop-color="rgb(0,0,82)"/><stop offset="0.500" stop-color="rgb(0,0,73)"/><stop offset="0.531" stop-color="rgb(0,0,65)"/><stop offset="0.562" stop-color="rgb(0,0,58)"/><stop offset="0.594" stop-color="rgb(0,0,50)"/><stop offset="0.625" stop-color="rgb(0,0,44)"/><stop offset="0.656" stop-color="rgb(0,0,37)"/><stop offset="0.688" stop-color="rgb(0,0,31)"/><stop offset="0.719" stop-color="rgb(0,0,26)"/><stop offset="0.750" stop-color="rgb(0,0,21)"/><stop offset="0.781" stop-color="rgb(0,0,17)"/><stop offset="0.812" stop-color="rgb(0,0,13)"/><stop offset="0.844" stop-color="rgb(0,0,9)"/><stop offset="0.875" stop-color="rgb(0,0,6)"/><stop offset="0.906" stop-color="rgb(0,0,4)"/><stop offset="0.938" stop-color="rgb(0,0,2)"/><stop offset="0.969" stop-color="rgb(0,0,0)"/><stop offset="1.000" stop-color="rgb(0,0,0)"/></linearGradient>
<linearGradient id="sa2" gradientUnits="userSpaceOnUse" x1="1397.30" y1="296.70" x2="1397.84" y2="465.29"><stop offset="0.000" stop-color="rgb(0,0,0)"/><stop offset="0.031" stop-color="rgb(0,0,0)"/><stop offset="0.062" stop-color="rgb(0,0,2)"/><stop offset="0.094" stop-color="rgb(0,0,4)"/><stop offset="0.125" stop-color="rgb(0,0,6)"/><stop offset="0.156" stop-color="rgb(0,0,9)"/><stop offset="0.188" stop-color="rgb(0,0,13)"/><stop offset="0.219" stop-color="rgb(0,0,17)"/><stop offset="0.250" stop-color="rgb(0,0,21)"/><stop offset="0.281" stop-color="rgb(0,0,26)"/><stop offset="0.312" stop-color="rgb(0,0,31)"/><stop offset="0.344" stop-color="rgb(0,0,37)"/><stop offset="0.375" stop-color="rgb(0,0,44)"/><stop offset="0.406" stop-color="rgb(0,0,50)"/><stop offset="0.438" stop-color="rgb(0,0,58)"/><stop offset="0.469" stop-color="rgb(0,0,65)"/><stop offset="0.500" stop-color="rgb(0,0,73)"/><stop offset="0.531" stop-color="rgb(0,0,82)"/><stop offset="0.562" stop-color="rgb(0,0,91)"/><stop offset="0.594" stop-color="rgb(0,0,100)"/><stop offset="0.625" stop-color="rgb(0,0,109)"/><stop offset="0.656" stop-color="rgb(0,0,119)"/><stop offset="0.688" stop-color="rgb(0,0,130)"/><stop offset="0.719" stop-color="rgb(0,0,141)"/><stop offset="0.750" stop-color="rgb(0,0,152)"/><stop offset="0.781" stop-color="rgb(0,0,164)"/><stop offset="0.812" stop-color="rgb(0,0,175)"/><stop offset="0.844" stop-color="rgb(0,0,188)"/><stop offset="0.875" stop-color="rgb(0,0,201)"/><stop offset="0.906" stop-color="rgb(0,0,214)"/><stop offset="0.938" stop-color="rgb(0,0,227)"/><stop offset="0.969" stop-color="rgb(0,0,241)"/><stop offset="1.000" stop-color="rgb(0,0,255)"/></linearGradient>
<linearGradient id="sb2" gradientUnits="userSpaceOnUse" x1="1407.73" y1="465.26" x2="1344.06" y2="441.92"><stop offset="0.000" stop-color="rgb(255,0,0)"/><stop offset="0.031" stop-color="rgb(241,0,0)"/><stop offset="0.062" stop-color="rgb(227,0,0)"/><stop offset="0.094" stop-color="rgb(214,0,0)"/><stop offset="0.125" stop-color="rgb(201,0,0)"/><stop offset="0.156" stop-color="rgb(188,0,0)"/><stop offset="0.188" stop-color="rgb(175,0,0)"/><stop offset="0.219" stop-color="rgb(164,0,0)"/><stop offset="0.250" stop-color="rgb(152,0,0)"/><stop offset="0.281" stop-color="rgb(141,0,0)"/><stop offset="0.312" stop-color="rgb(130,0,0)"/><stop offset="0.344" stop-color="rgb(119,0,0)"/><stop offset="0.375" stop-color="rgb(109,0,0)"/><stop offset="0.406" stop-color="rgb(100,0,0)"/><stop offset="0.438" stop-color="rgb(91,0,0)"/><stop offset="0.469" stop-color="rgb(82,0,0)"/><stop offset="0.500" stop-color="rgb(73,0,0)"/><stop offset="0.531" stop-color="rgb(65,0,0)"/><stop offset="0.562" stop-color="rgb(58,0,0)"/><stop offset="0.594" stop-color="rgb(50,0,0)"/><stop offset="0.625" stop-color="rgb(44,0,0)"/><stop offset="0.656" stop-color="rgb(37,0,0)"/><stop offset="0.688" stop-color="rgb(31,0,0)"/><stop offset="0.719" stop-color="rgb(26,0,0)"/><stop offset="0.750" stop-color="rgb(21,0,0)"/><stop offset="0.781" stop-color="rgb(17,0,0)"/><stop offset="0.812" stop-color="rgb(13,0,0)"/><stop offset="0.844" stop-color="rgb(9,0,0)"/><stop offset="0.875" stop-color="rgb(6,0,0)"/><stop offset="0.906" stop-color="rgb(4,0,0)"/><stop offset="0.938" stop-color="rgb(2,0,0)"/><stop offset="0.969" stop-color="rgb(0,0,0)"/><stop offset="1.000" stop-color="rgb(0,0,0)"/></linearGradient>
<linearGradient id="sa3" gradientUnits="userSpaceOnUse" x1="1274.15" y1="632.58" x2="1273.62" y2="465.69"><stop offset="0.000" stop-color="rgb(0,0,0)"/><stop offset="0.031" stop-color="rgb(0,0,0)"/><stop offset="0.062" stop-color="rgb(0,2,0)"/><stop offset="0.094" stop-color="rgb(0,4,0)"/><stop offset="0.125" stop-color="rgb(0,6,0)"/><stop offset="0.156" stop-color="rgb(0,9,0)"/><stop offset="0.188" stop-color="rgb(0,13,0)"/><stop offset="0.219" stop-color="rgb(0,17,0)"/><stop offset="0.250" stop-color="rgb(0,21,0)"/><stop offset="0.281" stop-color="rgb(0,26,0)"/><stop offset="0.312" stop-color="rgb(0,31,0)"/><stop offset="0.344" stop-color="rgb(0,37,0)"/><stop offset="0.375" stop-color="rgb(0,44,0)"/><stop offset="0.406" stop-color="rgb(0,50,0)"/><stop offset="0.438" stop-color="rgb(0,58,0)"/><stop offset="0.469" stop-color="rgb(0,65,0)"/><stop offset="0.500" stop-color="rgb(0,73,0)"/><stop offset="0.531" stop-color="rgb(0,82,0)"/><stop offset="0.562" stop-color="rgb(0,91,0)"/><stop offset="0.594" stop-color="rgb(0,100,0)"/><stop offset="0.625" stop-color="rgb(0,109,0)"/><stop offset="0.656" stop-color="rgb(0,119,0)"/><stop offset="0.688" stop-color="rgb(0,130,0)"/><stop offset="0.719" stop-color="rgb(0,141,0)"/><stop offset="0.750" stop-color="rgb(0,152,0)"/><stop offset="0.781" stop-color="rgb(0,164,0)"/><stop offset="0.812" stop-color="rgb(0,175,0)"/><stop offset="0.844" stop-color="rgb(0,188,0)"/><stop offset="0.875" stop-color="rgb(0,201,0)"/><stop offset="0.906" stop-color="rgb(0,214,0)"/><stop offset="0.938" stop-color="rgb(0,227,0)"/><stop offset="0.969" stop-color="rgb(0,241,0)"/><stop offset="1.000" stop-color="rgb(0,255,0)"/></linearGradient>
<linearGradient id="sb3" gradientUnits="userSpaceOnUse" x1="1407.73" y1="465.26" x2="1344.06" y2="441.92"><stop offset="0.000" stop-color="rgb(255,0,0)"/><stop offset="0.031" stop-color="rgb(241,0,0)"/><stop offset="0.062" stop-color="rgb(227,0,0)"/><stop offset="0.094" stop-color="rgb(214,0,0)"/><stop offset="0.125" stop-color="rgb(201,0,0)"/><stop offset="0.156" stop-color="rgb(188,0,0)"/><stop offset="0.188" stop-color="rgb(175,0,0)"/><stop offset="0.219" stop-color="rgb(164,0,0)"/><stop offset="0.250" stop-color="rgb(152,0,0)"/><stop offset="0.281" stop-color="rgb(141,0,0)"/><stop offset="0.312" stop-color="rgb(130,0,0)"/><stop offset="0.344" stop-color="rgb(119,0,0)"/><stop offset="0.375" stop-color="rgb(109,0,0)"/><stop offset="0.406" stop-color="rgb(100,0,0)"/><stop offset="0.438" stop-color="rgb(91,0,0)"/><stop offset="0.469" stop-color="rgb(82,0,0)"/><stop offset="0.500" stop-color="rgb(73,0,0)"/><stop offset="0.531" stop-color="rgb(65,0,0)"/><stop offset="0.562" stop-color="rgb(58,0,0)"/><stop offset="0.594" stop-color="rgb(50,0,0)"/><stop offset="0.625" stop-color="rgb(44,0,0)"/><stop offset="0.656" stop-color="rgb(37,0,0)"/><stop offset="0.688" stop-color="rgb(31,0,0)"/><stop offset="0.719" stop-color="rgb(26,0,0)"/><stop offset="0.750" stop-color="rgb(21,0,0)"/><stop offset="0.781" stop-color="rgb(17,0,0)"/><stop offset="0.812" stop-color="rgb(13,0,0)"/><stop offset="0.844" stop-color="rgb(9,0,0)"/><stop offset="0.875" stop-color="rgb(6,0,0)"/><stop offset="0.906" stop-color="rgb(4,0,0)"/><stop offset="0.938" stop-color="rgb(2,0,0)"/><stop offset="0.969" stop-color="rgb(0,0,0)"/><stop offset="1.000" stop-color="rgb(0,0,0)"/></linearGradient>
<linearGradient id="sa4" gradientUnits="userSpaceOnUse" x1="1274.15" y1="632.58" x2="1417.48" y2="623.76"><stop offset="0.000" stop-color="rgb(0,0,0)"/><stop offset="0.031" stop-color="rgb(0,0,0)"/><stop offset="0.062" stop-color="rgb(2,0,0)"/><stop offset="0.094" stop-color="rgb(4,0,0)"/><stop offset="0.125" stop-color="rgb(6,0,0)"/><stop offset="0.156" stop-color="rgb(9,0,0)"/><stop offset="0.188" stop-color="rgb(13,0,0)"/><stop offset="0.219" stop-color="rgb(17,0,0)"/><stop offset="0.250" stop-color="rgb(21,0,0)"/><stop offset="0.281" stop-color="rgb(26,0,0)"/><stop offset="0.312" stop-color="rgb(31,0,0)"/><stop offset="0.344" stop-color="rgb(37,0,0)"/><stop offset="0.375" stop-color="rgb(44,0,0)"/><stop offset="0.406" stop-color="rgb(50,0,0)"/><stop offset="0.438" stop-color="rgb(58,0,0)"/><stop offset="0.469" stop-color="rgb(65,0,0)"/><stop offset="0.500" stop-color="rgb(73,0,0)"/><stop offset="0.531" stop-color="rgb(82,0,0)"/><stop offset="0.562" stop-color="rgb(91,0,0)"/><stop offset="0.594" stop-color="rgb(100,0,0)"/><stop offset="0.625" stop-color="rgb(109,0,0)"/><stop offset="0.656" stop-color="rgb(119,0,0)"/><stop offset="0.688" stop-color="rgb(130,0,0)"/><stop offset="0.719" stop-color="rgb(141,0,0)"/><stop offset="0.750" stop-color="rgb(152,0,0)"/><stop offset="0.781" stop-color="rgb(164,0,0)"/><stop offset="0.812" stop-color="rgb(175,0,0)"/><stop offset="0.844" stop-color="rgb(188,0,0)"/><stop offset="0.875" stop-color="rgb(201,0,0)"/><stop offset="0.906" stop-color="rgb(214,0,0)"/><stop offset="0.938" stop-color="rgb(227,0,0)"/><stop offset="0.969" stop-color="rgb(241,0,0)"/><stop offset="1.000" stop-color="rgb(255,0,0)"/></linearGradient>
<linearGradient id="sb4" gradientUnits="userSpaceOnUse" x1="1407.73" y1="465.26" x2="1447.39" y2="560.26"><stop offset="0.000" stop-color="rgb(0,255,0)"/><stop offset="0.031" stop-color="rgb(0,241,0)"/><stop offset="0.062" stop-color="rgb(0,227,0)"/><stop offset="0.094" stop-color="rgb(0,214,0)"/><stop offset="0.125" stop-color="rgb(0,201,0)"/><stop offset="0.156" stop-color="rgb(0,188,0)"/><stop offset="0.188" stop-color="rgb(0,175,0)"/><stop offset="0.219" stop-color="rgb(0,164,0)"/><stop offset="0.250" stop-color="rgb(0,152,0)"/><stop offset="0.281" stop-color="rgb(0,141,0)"/><stop offset="0.312" stop-color="rgb(0,130,0)"/><stop offset="0.344" stop-color="rgb(0,119,0)"/><stop offset="0.375" stop-color="rgb(0,109,0)"/><stop offset="0.406" stop-color="rgb(0,100,0)"/><stop offset="0.438" stop-color="rgb(0,91,0)"/><stop offset="0.469" stop-color="rgb(0,82,0)"/><stop offset="0.500" stop-color="rgb(0,73,0)"/><stop offset="0.531" stop-color="rgb(0,65,0)"/><stop offset="0.562" stop-color="rgb(0,58,0)"/><stop offset="0.594" stop-color="rgb(0,50,0)"/><stop offset="0.625" stop-color="rgb(0,44,0)"/><stop offset="0.656" stop-color="rgb(0,37,0)"/><stop offset="0.688" stop-color="rgb(0,31,0)"/><stop offset="0.719" stop-color="rgb(0,26,0)"/><stop offset="0.750" stop-color="rgb(0,21,0)"/><stop offset="0.781" stop-color="rgb(0,17,0)"/><stop offset="0.812" stop-color="rgb(0,13,0)"/><stop offset="0.844" stop-color="rgb(0,9,0)"/><stop offset="0.875" stop-color="rgb(0,6,0)"/><stop offset="0.906" stop-color="rgb(0,4,0)"/><stop offset="0.938" stop-color="rgb(0,2,0)"/><stop offset="0.969" stop-color="rgb(0,0,0)"/><stop offset="1.000" stop-color="rgb(0,0,0)"/></linearGradient>
<linearGradient id="sa5" gradientUnits="userSpaceOnUse" x1="1676.44" y1="464.64" x2="1408.70" y2="481.12"><stop offset="0.000" stop-color="rgb(0,0,0)"/><stop offset="0.031" stop-color="rgb(0,0,0)"/><stop offset="0.062" stop-color="rgb(0,0,2)"/><stop offset="0.094" stop-color="rgb(0,0,4)"/><stop offset="0.125" stop-color="rgb(0,0,6)"/><stop offset="0.156" stop-color="rgb(0,0,9)"/><stop offset="0.188" stop-color="rgb(0,0,13)"/><stop offset="0.219" stop-color="rgb(0,0,17)"/><stop offset="0.250" stop-color="rgb(0,0,21)"/><stop offset="0.281" stop-color="rgb(0,0,26)"/><stop offset="0.312" stop-color="rgb(0,0,31)"/><stop offset="0.344" stop-color="rgb(0,0,37)"/><stop offset="0.375" stop-color="rgb(0,0,44)"/><stop offset="0.406" stop-color="rgb(0,0,50)"/><stop offset="0.438" stop-color="rgb(0,0,58)"/><stop offset="0.469" stop-color="rgb(0,0,65)"/><stop offset="0.500" stop-color="rgb(0,0,73)"/><stop offset="0.531" stop-color="rgb(0,0,82)"/><stop offset="0.562" stop-color="rgb(0,0,91)"/><stop offset="0.594" stop-color="rgb(0,0,100)"/><stop offset="0.625" stop-color="rgb(0,0,109)"/><stop offset="0.656" stop-color="rgb(0,0,119)"/><stop offset="0.688" stop-color="rgb(0,0,130)"/><stop offset="0.719" stop-color="rgb(0,0,141)"/><stop offset="0.750" stop-color="rgb(0,0,152)"/><stop offset="0.781" stop-color="rgb(0,0,164)"/><stop offset="0.812" stop-color="rgb(0,0,175)"/><stop offset="0.844" stop-color="rgb(0,0,188)"/><stop offset="0.875" stop-color="rgb(0,0,201)"/><stop offset="0.906" stop-color="rgb(0,0,214)"/><stop offset="0.938" stop-color="rgb(0,0,227)"/><stop offset="0.969" stop-color="rgb(0,0,241)"/><stop offset="1.000" stop-color="rgb(0,0,255)"/></linearGradient>
<linearGradient id="sb5" gradientUnits="userSpaceOnUse" x1="1407.73" y1="465.26" x2="1447.39" y2="560.26"><stop offset="0.000" stop-color="rgb(0,255,0)"/><stop offset="0.031" stop-color="rgb(0,241,0)"/><stop offset="0.062" stop-color="rgb(0,227,0)"/><stop offset="0.094" stop-color="rgb(0,214,0)"/><stop offset="0.125" stop-color="rgb(0,201,0)"/><stop offset="0.156" stop-color="rgb(0,188,0)"/><stop offset="0.188" stop-color="rgb(0,175,0)"/><stop offset="0.219" stop-color="rgb(0,164,0)"/><stop offset="0.250" stop-color="rgb(0,152,0)"/><stop offset="0.281" stop-color="rgb(0,141,0)"/><stop offset="0.312" stop-color="rgb(0,130,0)"/><stop offset="0.344" stop-color="rgb(0,119,0)"/><stop offset="0.375" stop-color="rgb(0,109,0)"/><stop offset="0.406" stop-color="rgb(0,100,0)"/><stop offset="0.438" stop-color="rgb(0,91,0)"/><stop offset="0.469" stop-color="rgb(0,82,0)"/><stop offset="0.500" stop-color="rgb(0,73,0)"/><stop offset="0.531" stop-color="rgb(0,65,0)"/><stop offset="0.562" stop-color="rgb(0,58,0)"/><stop offset="0.594" stop-color="rgb(0,50,0)"/><stop offset="0.625" stop-color="rgb(0,44,0)"/><stop offset="0.656" stop-color="rgb(0,37,0)"/><stop offset="0.688" stop-color="rgb(0,31,0)"/><stop offset="0.719" stop-color="rgb(0,26,0)"/><stop offset="0.750" stop-color="rgb(0,21,0)"/><stop offset="0.781" stop-color="rgb(0,17,0)"/><stop offset="0.812" stop-color="rgb(0,13,0)"/><stop offset="0.844" stop-color="rgb(0,9,0)"/><stop offset="0.875" stop-color="rgb(0,6,0)"/><stop offset="0.906" stop-color="rgb(0,4,0)"/><stop offset="0.938" stop-color="rgb(0,2,0)"/><stop offset="0.969" stop-color="rgb(0,0,0)"/><stop offset="1.000" stop-color="rgb(0,0,0)"/></linearGradient>
</defs>
<g style="isolation:isolate" shape-rendering="crispEdges"><polygon points="1405.23,466.47 1680.75,465.83 1494.99,354.08" fill="rgb(255,0,0)"/><polygon points="1405.23,466.47 1680.75,465.83 1494.99,354.08" fill="url(#sa0)" style="mix-blend-mode:screen"/><polygon points="1405.23,466.47 1680.75,465.83 1494.99,354.08" fill="url(#sb0)" style="mix-blend-mode:screen"/></g>
<g style="isolation:isolate" shape-rendering="crispEdges"><polygon points="1406.72,468.44 1395.96,294.49 1497.07,355.32" fill="rgb(0,255,0)"/><polygon points="1406.72,468.44 1395.96,294.49 1497.07,355.32" fill="url(#sa1)" style="mix-blend-mode:screen"/><polygon points="1406.72,468.44 1395.96,294.49 1497.07,355.32" fill="url(#sb1)" style="mix-blend-mode:screen"/></g>
<g style="isolation:isolate" shape-rendering="crispEdges"><polygon points="1409.00,466.46 1398.14,290.91 1333.69,466.70" fill="rgb(0,255,0)"/><polygon points="1409.00,466.46 1398.14,290.91 1333.69,466.70" fill="url(#sa2)" style="mix-blend-mode:screen"/><polygon points="1409.00,466.46 1398.14,290.91 1333.69,466.70" fill="url(#sb2)" style="mix-blend-mode:screen"/></g>
<g style="isolation:isolate" shape-rendering="crispEdges"><polygon points="1410.23,464.05 1270.48,639.10 1334.57,464.30" fill="rgb(0,0,255)"/><polygon points="1410.23,464.05 1270.48,639.10 1334.57,464.30" fill="url(#sa3)" style="mix-blend-mode:screen"/><polygon points="1410.23,464.05 1270.48,639.10 1334.57,464.30" fill="url(#sb3)" style="mix-blend-mode:screen"/></g>
<g style="isolation:isolate" shape-rendering="crispEdges"><polygon points="1408.73,462.08 1270.29,635.49 1415.67,574.80" fill="rgb(0,0,255)"/><polygon points="1408.73,462.08 1270.29,635.49 1415.67,574.80" fill="url(#sa4)" style="mix-blend-mode:screen"/><polygon points="1408.73,462.08 1270.29,635.49 1415.67,574.80" fill="url(#sb4)" style="mix-blend-mode:screen"/></g>
<g style="isolation:isolate" shape-rendering="crispEdges"><polygon points="1406.45,464.06 1682.46,463.43 1413.33,575.78" fill="rgb(255,0,0)"/><polygon points="1406.45,464.06 1682.46,463.43 1413.33,575.78" fill="url(#sa5)" style="mix-blend-mode:screen"/><polygon points="1406.45,464.06 1682.46,463.43 1413.33,575.78" fill="url(#sb5)" style="mix-blend-mode:screen"/></g>
</svg>
</div>
<svg class="L" width="1920" height="1039" viewBox="0 0 1920 1039">
<defs>
<linearGradient id="iUp" gradientUnits="userSpaceOnUse" x1="1601" y1="160" x2="1834" y2="300"><stop offset="0" stop-color="#689c00"/><stop offset="0.5" stop-color="#949400"/><stop offset="1" stop-color="#9a7400"/></linearGradient>
<linearGradient id="iLo" gradientUnits="userSpaceOnUse" x1="1610" y1="200" x2="1834" y2="345"><stop offset="0" stop-color="#b8ff00"/><stop offset="0.5" stop-color="#ffff10"/><stop offset="1" stop-color="#ffb400"/></linearGradient>
</defs>
<rect x="1151.0" y="147.0" width="690.2" height="523.0" fill="none" stroke="#a8a8a8" stroke-width="1.6"/>
<line x1="1145.0" y1="670.0" x2="1151.0" y2="670.0" stroke="#d0d0d0" stroke-width="1.4" />
<text x="1144.3" y="677.64" font-size="15.5" fill="#e0e0e0" text-anchor="end" font-weight="normal" textLength="7.8" lengthAdjust="spacingAndGlyphs" >0</text>
<line x1="1151.0" y1="670.0" x2="1151.0" y2="676.0" stroke="#d0d0d0" stroke-width="1.4" />
<text x="1151.0" y="693.1" font-size="15.5" fill="#e0e0e0" text-anchor="middle" font-weight="normal" textLength="7.8" lengthAdjust="spacingAndGlyphs" >0</text>
<line x1="1145.0" y1="607.8" x2="1151.0" y2="607.8" stroke="#d0d0d0" stroke-width="1.4" />
<text x="1144.3" y="615.21" font-size="15.5" fill="#e0e0e0" text-anchor="end" font-weight="normal" textLength="21.3" lengthAdjust="spacingAndGlyphs" >0,1</text>
<line x1="1233.0875" y1="670.0" x2="1233.0875" y2="676.0" stroke="#d0d0d0" stroke-width="1.4" />
<text x="1233.0875" y="693.1" font-size="15.5" fill="#e0e0e0" text-anchor="middle" font-weight="normal" textLength="21.3" lengthAdjust="spacingAndGlyphs" >0,1</text>
<line x1="1145.0" y1="545.6" x2="1151.0" y2="545.6" stroke="#d0d0d0" stroke-width="1.4" />
<text x="1144.3" y="552.78" font-size="15.5" fill="#e0e0e0" text-anchor="end" font-weight="normal" textLength="21.3" lengthAdjust="spacingAndGlyphs" >0,2</text>
<line x1="1315.175" y1="670.0" x2="1315.175" y2="676.0" stroke="#d0d0d0" stroke-width="1.4" />
<text x="1315.175" y="693.1" font-size="15.5" fill="#e0e0e0" text-anchor="middle" font-weight="normal" textLength="21.3" lengthAdjust="spacingAndGlyphs" >0,2</text>
<line x1="1145.0" y1="483.4" x2="1151.0" y2="483.4" stroke="#d0d0d0" stroke-width="1.4" />
<text x="1144.3" y="490.34999999999997" font-size="15.5" fill="#e0e0e0" text-anchor="end" font-weight="normal" textLength="21.3" lengthAdjust="spacingAndGlyphs" >0,3</text>
<line x1="1397.2625" y1="670.0" x2="1397.2625" y2="676.0" stroke="#d0d0d0" stroke-width="1.4" />
<text x="1397.2625" y="693.1" font-size="15.5" fill="#e0e0e0" text-anchor="middle" font-weight="normal" textLength="21.3" lengthAdjust="spacingAndGlyphs" >0,3</text>
<line x1="1145.0" y1="421.2" x2="1151.0" y2="421.2" stroke="#d0d0d0" stroke-width="1.4" />
<text x="1144.3" y="427.91999999999996" font-size="15.5" fill="#e0e0e0" text-anchor="end" font-weight="normal" textLength="21.3" lengthAdjust="spacingAndGlyphs" >0,4</text>
<line x1="1479.35" y1="670.0" x2="1479.35" y2="676.0" stroke="#d0d0d0" stroke-width="1.4" />
<text x="1479.35" y="693.1" font-size="15.5" fill="#e0e0e0" text-anchor="middle" font-weight="normal" textLength="21.3" lengthAdjust="spacingAndGlyphs" >0,4</text>
<line x1="1145.0" y1="359.0" x2="1151.0" y2="359.0" stroke="#d0d0d0" stroke-width="1.4" />
<text x="1144.3" y="365.49" font-size="15.5" fill="#e0e0e0" text-anchor="end" font-weight="normal" textLength="21.3" lengthAdjust="spacingAndGlyphs" >0,5</text>
<line x1="1561.4375" y1="670.0" x2="1561.4375" y2="676.0" stroke="#d0d0d0" stroke-width="1.4" />
<text x="1561.4375" y="693.1" font-size="15.5" fill="#e0e0e0" text-anchor="middle" font-weight="normal" textLength="21.3" lengthAdjust="spacingAndGlyphs" >0,5</text>
<line x1="1145.0" y1="296.8" x2="1151.0" y2="296.8" stroke="#d0d0d0" stroke-width="1.4" />
<text x="1144.3" y="303.06" font-size="15.5" fill="#e0e0e0" text-anchor="end" font-weight="normal" textLength="21.3" lengthAdjust="spacingAndGlyphs" >0,6</text>
<line x1="1643.525" y1="670.0" x2="1643.525" y2="676.0" stroke="#d0d0d0" stroke-width="1.4" />
<text x="1643.525" y="693.1" font-size="15.5" fill="#e0e0e0" text-anchor="middle" font-weight="normal" textLength="21.3" lengthAdjust="spacingAndGlyphs" >0,6</text>
<line x1="1145.0" y1="234.60000000000002" x2="1151.0" y2="234.60000000000002" stroke="#d0d0d0" stroke-width="1.4" />
<text x="1144.3" y="240.63000000000005" font-size="15.5" fill="#e0e0e0" text-anchor="end" font-weight="normal" textLength="21.3" lengthAdjust="spacingAndGlyphs" >0,7</text>
<line x1="1725.6125" y1="670.0" x2="1725.6125" y2="676.0" stroke="#d0d0d0" stroke-width="1.4" />
<text x="1725.6125" y="693.1" font-size="15.5" fill="#e0e0e0" text-anchor="middle" font-weight="normal" textLength="21.3" lengthAdjust="spacingAndGlyphs" >0,7</text>
<line x1="1145.0" y1="172.39999999999998" x2="1151.0" y2="172.39999999999998" stroke="#d0d0d0" stroke-width="1.4" />
<text x="1144.3" y="178.2" font-size="15.5" fill="#e0e0e0" text-anchor="end" font-weight="normal" textLength="21.3" lengthAdjust="spacingAndGlyphs" >0,8</text>
<line x1="1807.7" y1="670.0" x2="1807.7" y2="676.0" stroke="#d0d0d0" stroke-width="1.4" />
<text x="1807.7" y="693.1" font-size="15.5" fill="#e0e0e0" text-anchor="middle" font-weight="normal" textLength="21.3" lengthAdjust="spacingAndGlyphs" >0,8</text>
<rect x="1601" y="154" width="233" height="196" fill="url(#iLo)"/>
<polygon points="1601,154 1834,154 1834,328.4 1601,175" fill="url(#iUp)"/>
<rect x="1601" y="154" width="233" height="196" fill="none" stroke="#a8a8a8" stroke-width="1.8"/>
<rect x="1709" y="244" width="14.5" height="14.5" fill="rgba(255,255,255,0.15)" stroke="#f4f4f4" stroke-width="1.8"/>
<circle cx="1722" cy="250" r="5.2" fill="rgba(150,150,40,0.75)" stroke="#111" stroke-width="1.4"/>
<rect x="1327.0" y="457.9" width="14.5" height="14.5" fill="rgba(255,255,255,0.25)" stroke="#f0f0f0" stroke-width="1.8"/>
<rect x="1341.2" y="457.9" width="14.5" height="14.5" fill="rgba(255,255,255,0.25)" stroke="#f0f0f0" stroke-width="1.8"/>
<rect x="1355.7" y="457.9" width="14.5" height="14.5" fill="rgba(255,255,255,0.25)" stroke="#f0f0f0" stroke-width="1.8"/>
<rect x="1370.0" y="457.9" width="14.5" height="14.5" fill="rgba(255,255,255,0.25)" stroke="#f0f0f0" stroke-width="1.8"/>
<rect x="1384.2" y="457.9" width="14.5" height="14.5" fill="rgba(255,255,255,0.25)" stroke="#f0f0f0" stroke-width="1.8"/>
<rect x="1372.5" y="491.8" width="14.5" height="14.5" fill="rgba(255,255,255,0.25)" stroke="#f0f0f0" stroke-width="1.8"/>
<rect x="1346.5" y="524.4" width="14.5" height="14.5" fill="rgba(255,255,255,0.25)" stroke="#f0f0f0" stroke-width="1.8"/>
<rect x="1320.5" y="556.1" width="14.5" height="14.5" fill="rgba(255,255,255,0.25)" stroke="#f0f0f0" stroke-width="1.8"/>
<rect x="1294.5" y="588.0" width="14.5" height="14.5" fill="rgba(255,255,255,0.25)" stroke="#f0f0f0" stroke-width="1.8"/>
<rect x="1265.7" y="624.5" width="14.5" height="14.5" fill="rgba(255,255,255,0.25)" stroke="#f0f0f0" stroke-width="1.8"/>
<rect x="1401.3" y="479.6" width="14.5" height="14.5" fill="rgba(255,255,255,0.25)" stroke="#f0f0f0" stroke-width="1.8"/>
<rect x="1402.8" y="502.8" width="14.5" height="14.5" fill="rgba(255,255,255,0.25)" stroke="#f0f0f0" stroke-width="1.8"/>
<rect x="1402.8" y="521.5" width="14.5" height="14.5" fill="rgba(255,255,255,0.25)" stroke="#f0f0f0" stroke-width="1.8"/>
<rect x="1404.2" y="543.8" width="14.5" height="14.5" fill="rgba(255,255,255,0.25)" stroke="#f0f0f0" stroke-width="1.8"/>
<rect x="1405.8" y="566.2" width="14.5" height="14.5" fill="rgba(255,255,255,0.25)" stroke="#f0f0f0" stroke-width="1.8"/>
<rect x="1388.2" y="288.9" width="14.5" height="14.5" fill="rgba(255,255,255,0.25)" stroke="#f0f0f0" stroke-width="1.8"/>
<rect x="1391.2" y="324.8" width="14.5" height="14.5" fill="rgba(255,255,255,0.25)" stroke="#f0f0f0" stroke-width="1.8"/>
<rect x="1392.2" y="357.1" width="14.5" height="14.5" fill="rgba(255,255,255,0.25)" stroke="#f0f0f0" stroke-width="1.8"/>
<rect x="1395.2" y="389.4" width="14.5" height="14.5" fill="rgba(255,255,255,0.25)" stroke="#f0f0f0" stroke-width="1.8"/>
<rect x="1396.8" y="422.8" width="14.5" height="14.5" fill="rgba(255,255,255,0.25)" stroke="#f0f0f0" stroke-width="1.8"/>
<rect x="1418.2" y="435.4" width="14.5" height="14.5" fill="rgba(255,255,255,0.25)" stroke="#f0f0f0" stroke-width="1.8"/>
<rect x="1436.3" y="412.6" width="14.5" height="14.5" fill="rgba(255,255,255,0.25)" stroke="#f0f0f0" stroke-width="1.8"/>
<rect x="1453.5" y="391.1" width="14.5" height="14.5" fill="rgba(255,255,255,0.25)" stroke="#f0f0f0" stroke-width="1.8"/>
<rect x="1469.7" y="370.9" width="14.5" height="14.5" fill="rgba(255,255,255,0.25)" stroke="#f0f0f0" stroke-width="1.8"/>
<rect x="1488.0" y="347.9" width="14.5" height="14.5" fill="rgba(255,255,255,0.25)" stroke="#f0f0f0" stroke-width="1.8"/>
<rect x="1452.2" y="456.9" width="14.5" height="14.5" fill="rgba(255,255,255,0.25)" stroke="#f0f0f0" stroke-width="1.8"/>
<rect x="1507.5" y="456.9" width="14.5" height="14.5" fill="rgba(255,255,255,0.25)" stroke="#f0f0f0" stroke-width="1.8"/>
<rect x="1556.8" y="456.9" width="14.5" height="14.5" fill="rgba(255,255,255,0.25)" stroke="#f0f0f0" stroke-width="1.8"/>
<rect x="1608.5" y="456.9" width="14.5" height="14.5" fill="rgba(255,255,255,0.25)" stroke="#f0f0f0" stroke-width="1.8"/>
<rect x="1668.3" y="456.9" width="14.5" height="14.5" fill="rgba(255,255,255,0.25)" stroke="#f0f0f0" stroke-width="1.8"/>
<circle cx="1332.0" cy="465.2" r="5.1" fill="rgba(125,180,185,0.8)" stroke="#121212" stroke-width="1.4"/>
<circle cx="1348.0" cy="465.2" r="5.1" fill="rgba(125,180,185,0.8)" stroke="#121212" stroke-width="1.4"/>
<circle cx="1362.4" cy="465.2" r="5.1" fill="rgba(125,180,185,0.8)" stroke="#121212" stroke-width="1.4"/>
<circle cx="1376.8" cy="465.2" r="5.1" fill="rgba(125,180,185,0.8)" stroke="#121212" stroke-width="1.4"/>
<circle cx="1391.3" cy="465.2" r="5.1" fill="rgba(125,180,185,0.8)" stroke="#121212" stroke-width="1.4"/>
<circle cx="1379.7" cy="500.0" r="5.1" fill="rgba(140,140,200,0.85)" stroke="#121212" stroke-width="1.4"/>
<circle cx="1353.7" cy="533.0" r="5.1" fill="rgba(140,140,200,0.85)" stroke="#121212" stroke-width="1.4"/>
<circle cx="1327.7" cy="566.3" r="5.1" fill="rgba(140,140,200,0.85)" stroke="#121212" stroke-width="1.4"/>
<circle cx="1301.7" cy="598.0" r="5.1" fill="rgba(140,140,200,0.85)" stroke="#121212" stroke-width="1.4"/>
<circle cx="1408.6" cy="486.9" r="5.1" fill="rgba(190,130,190,0.85)" stroke="#121212" stroke-width="1.4"/>
<circle cx="1411.5" cy="510.0" r="5.1" fill="rgba(190,130,190,0.85)" stroke="#121212" stroke-width="1.4"/>
<circle cx="1413.0" cy="528.7" r="5.1" fill="rgba(190,130,190,0.85)" stroke="#121212" stroke-width="1.4"/>
<circle cx="1415.0" cy="551.0" r="5.1" fill="rgba(190,130,190,0.85)" stroke="#121212" stroke-width="1.4"/>
<circle cx="1416.4" cy="572.0" r="5.1" fill="rgba(190,130,190,0.85)" stroke="#121212" stroke-width="1.4"/>
<circle cx="1392.5" cy="292.0" r="5.1" fill="rgba(135,175,135,0.85)" stroke="#121212" stroke-width="1.4"/>
<circle cx="1395.4" cy="328.5" r="5.1" fill="rgba(135,175,135,0.85)" stroke="#121212" stroke-width="1.4"/>
<circle cx="1398.4" cy="362.6" r="5.1" fill="rgba(135,175,135,0.85)" stroke="#121212" stroke-width="1.4"/>
<circle cx="1401.3" cy="395.4" r="5.1" fill="rgba(135,175,135,0.85)" stroke="#121212" stroke-width="1.4"/>
<circle cx="1404.2" cy="430.0" r="5.1" fill="rgba(135,175,135,0.85)" stroke="#121212" stroke-width="1.4"/>
<circle cx="1426.4" cy="442.5" r="5.1" fill="rgba(190,185,130,0.85)" stroke="#121212" stroke-width="1.4"/>
<circle cx="1444.8" cy="419.3" r="5.1" fill="rgba(190,185,130,0.85)" stroke="#121212" stroke-width="1.4"/>
<circle cx="1462.2" cy="397.5" r="5.1" fill="rgba(190,185,130,0.85)" stroke="#121212" stroke-width="1.4"/>
<circle cx="1478.1" cy="377.6" r="5.1" fill="rgba(190,185,130,0.85)" stroke="#121212" stroke-width="1.4"/>
<circle cx="1496.1" cy="355.1" r="5.1" fill="rgba(190,185,130,0.85)" stroke="#121212" stroke-width="1.4"/>
<circle cx="1463.0" cy="464.0" r="5.1" fill="rgba(190,105,105,0.85)" stroke="#121212" stroke-width="1.4"/>
<circle cx="1520.5" cy="463.6" r="5.1" fill="rgba(190,105,105,0.85)" stroke="#121212" stroke-width="1.4"/>
<circle cx="1568.0" cy="463.6" r="5.1" fill="rgba(190,105,105,0.85)" stroke="#121212" stroke-width="1.4"/>
<circle cx="1619.8" cy="462.4" r="5.1" fill="rgba(190,105,105,0.85)" stroke="#121212" stroke-width="1.4"/>
<circle cx="1676.8" cy="462.4" r="5.1" fill="rgba(190,105,105,0.85)" stroke="#121212" stroke-width="1.4"/>
<rect x="1399.8" y="457.7" width="15" height="15" fill="rgba(255,255,255,0.1)" stroke="#0a0a0a" stroke-width="1.8"/>
<circle cx="1407.3" cy="465.2" r="5.1" fill="#ffffff" stroke="#121212" stroke-width="1.4"/>
<circle cx="1272.9" cy="632.5" r="5.1" fill="#1414c0" stroke="#0a0a60" stroke-width="1.2"/>
</svg>
</div></body></html>
